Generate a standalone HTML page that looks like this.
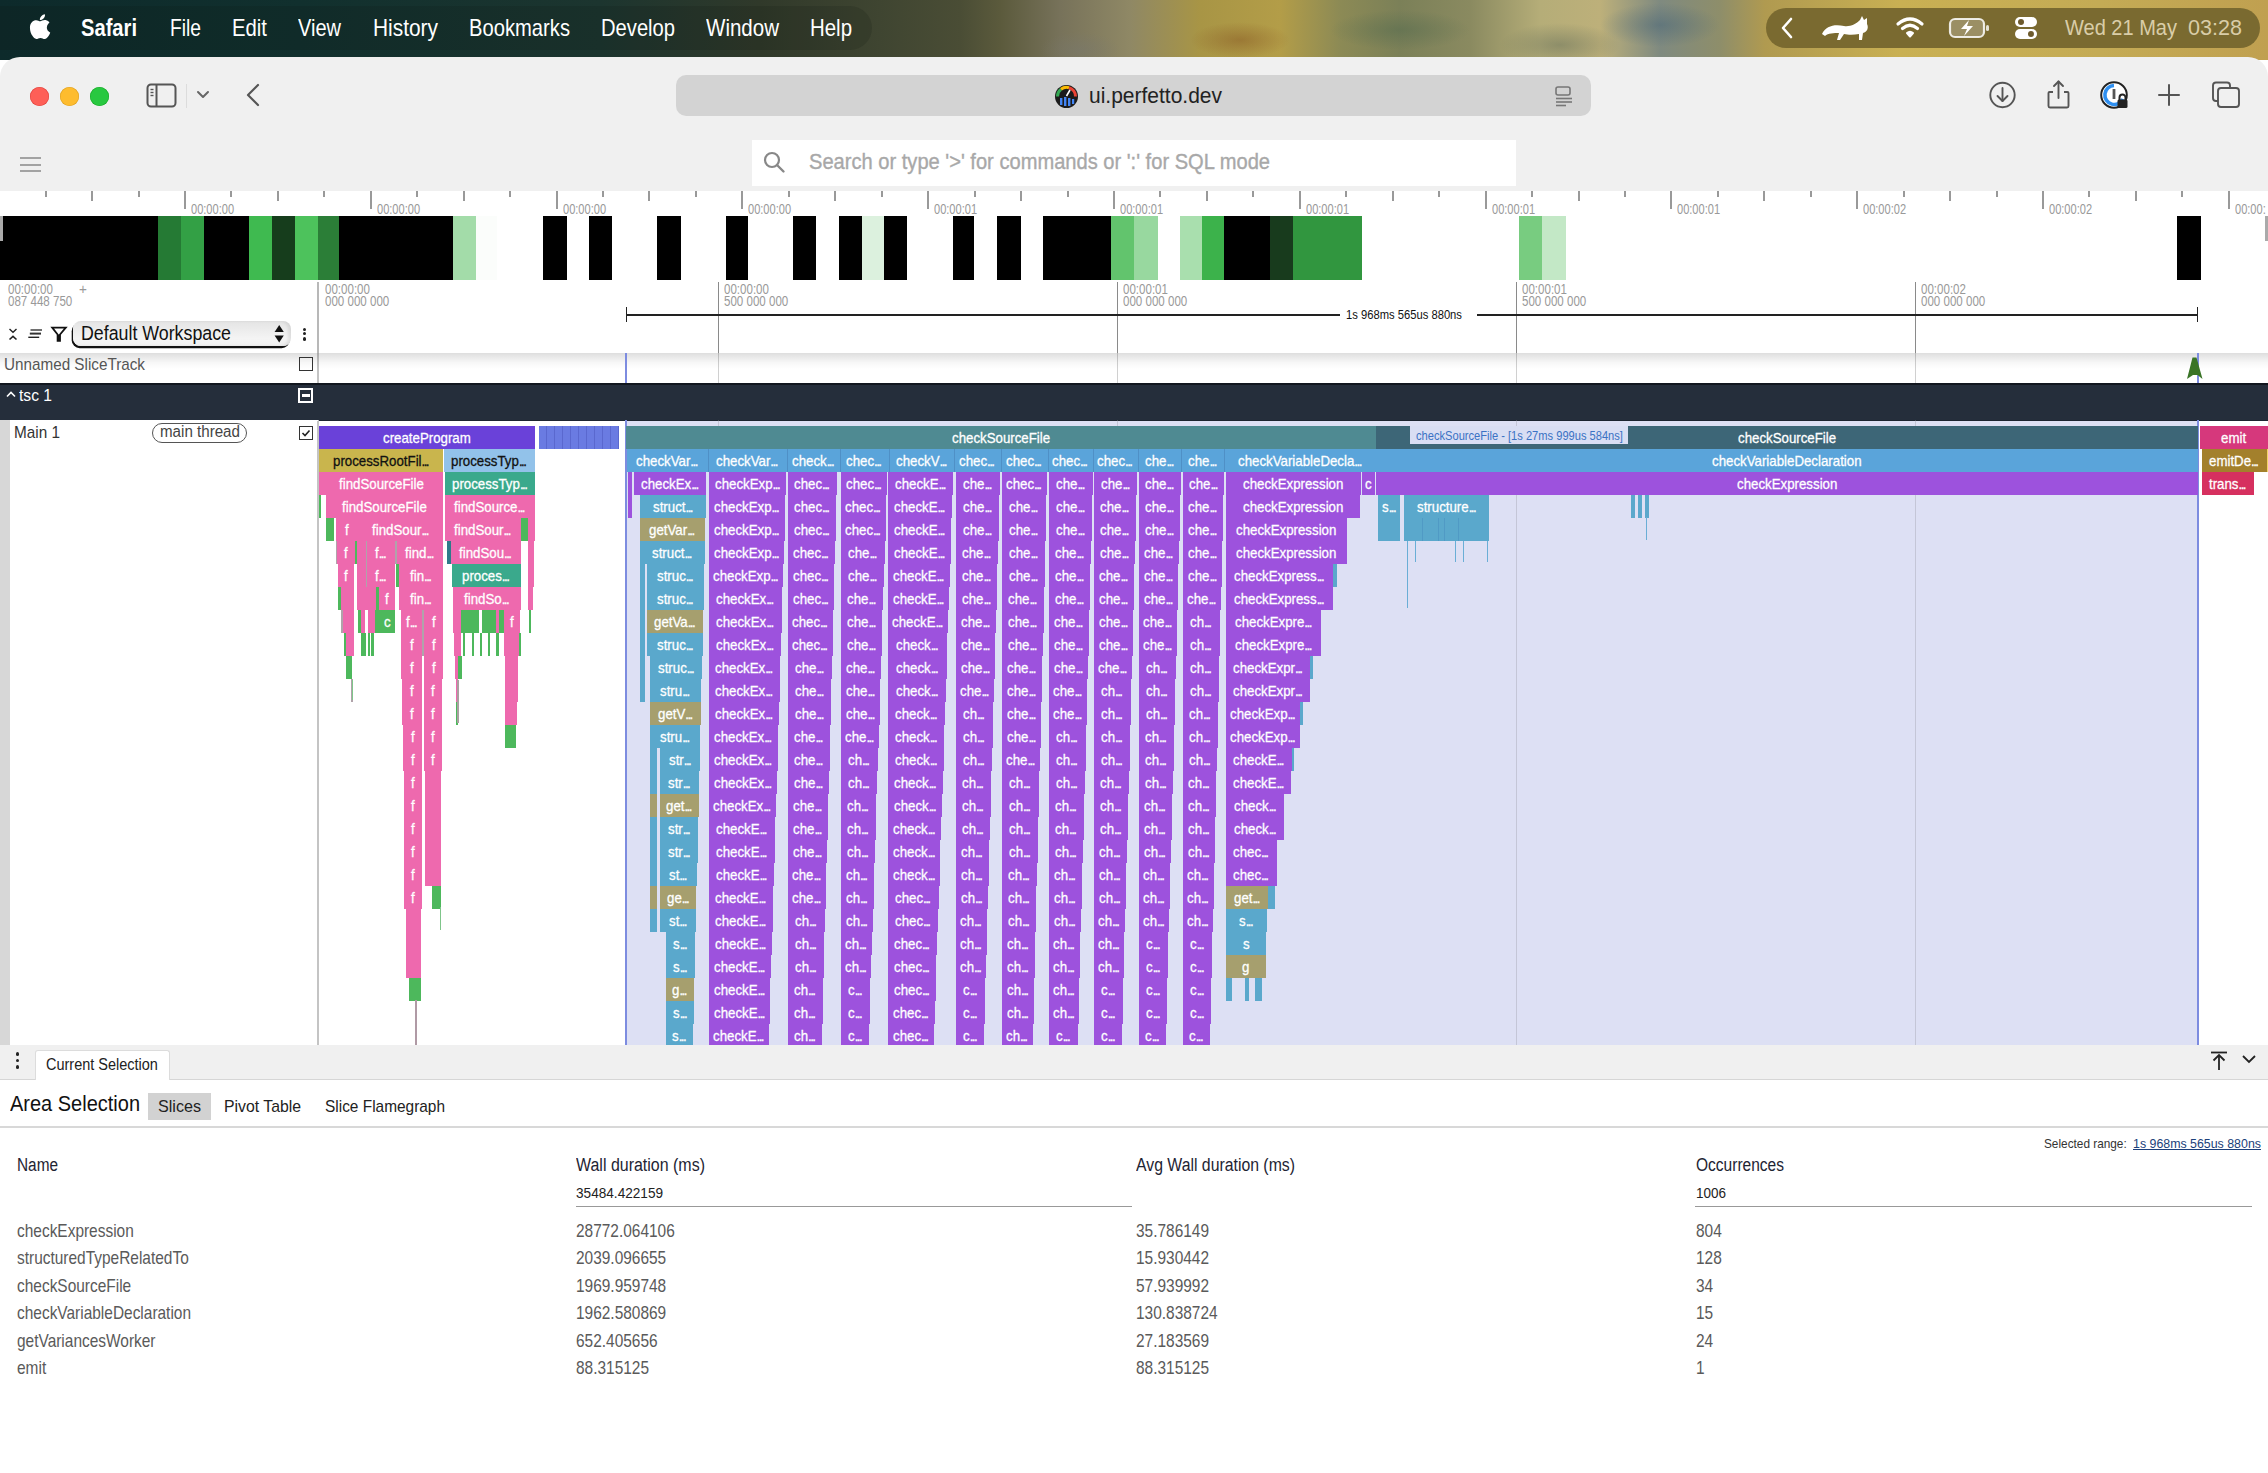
<!DOCTYPE html><html><head><meta charset="utf-8"><style>
*{margin:0;padding:0;box-sizing:border-box}
html,body{width:2268px;height:1473px;overflow:hidden;background:#fff;font-family:"Liberation Sans",sans-serif}
.a{position:absolute}
.t{position:absolute;white-space:nowrap;transform-origin:0 0}
.fl{-webkit-text-stroke:0.3px currentColor}
svg{position:absolute;overflow:visible}
</style></head><body><div class="a" style="left:0;top:0;width:2268px;height:60px;background:linear-gradient(90deg,#0d2a2b 0.00%,#11302e 13.23%,#1c352f 26.46%,#30392a 33.51%,#3f4531 38.80%,#4a4d35 42.33%,#5b5a3c 44.09%,#77725a 46.74%,#8f8865 49.82%,#a89545 52.91%,#b39d48 56.44%,#8c8a55 59.08%,#7b8058 61.73%,#8a8a60 64.81%,#b5ad78 67.90%,#bdb07a 70.55%,#7f8a80 73.19%,#8e8e6a 75.84%,#b09a50 77.82%,#c9b053 83.77%,#c4ab55 92.59%,#c0a050 100.00%)"></div>
<div class="a" style="left:0;top:0;width:2268px;height:60px;background:radial-gradient(ellipse 50px 18px at 1240px 40px,rgba(120,60,20,.35),transparent),radial-gradient(ellipse 70px 20px at 1400px 30px,rgba(90,110,80,.6),transparent),radial-gradient(ellipse 60px 22px at 1560px 45px,rgba(100,110,90,.5),transparent),radial-gradient(ellipse 60px 22px at 1660px 25px,rgba(70,100,120,.5),transparent),radial-gradient(ellipse 40px 18px at 1080px 50px,rgba(120,120,110,.5),transparent)"></div>
<div class="a" style="left:-40px;top:6px;width:912px;height:44px;border-radius:22px;background:rgba(15,20,12,.15)"></div>
<div class="a" style="left:1766px;top:8px;width:494px;height:40px;border-radius:20px;background:#7a6a30"></div>
<svg style="left:29px;top:14px" width="24" height="26" viewBox="0 0 170 200"><path fill="#fff" d="M150 68c-1 1-20 12-20 36 0 28 25 38 26 38 0 1-4 14-13 27-8 11-17 23-30 23s-17-8-32-8c-15 0-20 8-32 8s-21-11-30-24C8 152 0 128 0 105c0-37 24-57 48-57 13 0 23 8 31 8 8 0 20-9 35-9 6 0 26 1 36 21zM106 33c6-7 10-17 10-27 0-1 0-3 0-4-10 0-22 7-29 15-6 6-11 16-11 27 0 1 0 3 0 3 1 0 2 0 3 0 9 0 20-6 27-14z"/></svg>
<div class="t" style="left:81.00px;top:15.68px;font-size:24px;line-height:24px;color:#fff;transform:scaleX(0.8393);font-weight:bold;">Safari</div>
<div class="t" style="left:170.00px;top:15.68px;font-size:24px;line-height:24px;color:#fff;transform:scaleX(0.8019);">File</div>
<div class="t" style="left:232.00px;top:15.68px;font-size:24px;line-height:24px;color:#fff;transform:scaleX(0.8462);">Edit</div>
<div class="t" style="left:298.00px;top:15.68px;font-size:24px;line-height:24px;color:#fff;transform:scaleX(0.8337);">View</div>
<div class="t" style="left:373.00px;top:15.68px;font-size:24px;line-height:24px;color:#fff;transform:scaleX(0.8705);">History</div>
<div class="t" style="left:469.00px;top:15.68px;font-size:24px;line-height:24px;color:#fff;transform:scaleX(0.8413);">Bookmarks</div>
<div class="t" style="left:601.00px;top:15.68px;font-size:24px;line-height:24px;color:#fff;transform:scaleX(0.8406);">Develop</div>
<div class="t" style="left:706.00px;top:15.68px;font-size:24px;line-height:24px;color:#fff;transform:scaleX(0.8554);">Window</div>
<div class="t" style="left:810.00px;top:15.68px;font-size:24px;line-height:24px;color:#fff;transform:scaleX(0.8512);">Help</div>
<svg style="left:1780px;top:17px" width="14" height="22"><path d="M11 2 L3 11 L11 20" stroke="#fff" stroke-width="2.6" fill="none" stroke-linecap="round" stroke-linejoin="round"/></svg>
<svg style="left:1820px;top:14px" width="50" height="30" viewBox="0 0 50 30"><path fill="#fff" d="M2 20 C6 12 14 10 24 12 C30 13 36 10 40 6 L42 2 L44 6 L47 4 L47 10 C49 14 47 18 43 19 L42 26 L39 26 L39 20 C34 21 28 21 24 20 L20 26 L17 26 L19 19 C14 19 8 19 5 22 Z"/></svg>
<svg style="left:1895px;top:15px" width="30" height="24" viewBox="0 0 30 24"><path d="M3 9 Q15 -1 27 9" stroke="#fff" stroke-width="3.2" fill="none" stroke-linecap="round"/><path d="M7.5 13.5 Q15 7 22.5 13.5" stroke="#fff" stroke-width="3.2" fill="none" stroke-linecap="round"/><path d="M12 18 Q15 15.5 18 18 L15 21.5 Z" fill="#fff" stroke="#fff" stroke-width="2" stroke-linejoin="round"/></svg>
<svg style="left:1948px;top:16px" width="44" height="24" viewBox="0 0 44 24"><rect x="2" y="3" width="34" height="18" rx="5" stroke="#fff" stroke-opacity=".85" stroke-width="2.2" fill="rgba(255,255,255,.25)"/><rect x="38" y="9" width="3" height="6" rx="1.5" fill="#fff" fill-opacity=".8"/><path d="M21 4 L13 13 L19 13 L16 20 L25 10 L19 10 Z" fill="#fff"/></svg>
<svg style="left:2013px;top:15px" width="26" height="26" viewBox="0 0 26 26"><rect x="2" y="2" width="22" height="10" rx="5" fill="#fff"/><rect x="2" y="14" width="22" height="10" rx="5" fill="#fff"/><circle cx="8" cy="7" r="3" fill="#6d5a2c"/><circle cx="18" cy="19" r="3" fill="#6d5a2c"/></svg>
<div class="t" style="left:2065.00px;top:17.38px;font-size:22px;line-height:22px;color:#d9cda8;transform:scaleX(0.9099);">Wed 21 May</div>
<div class="t" style="left:2188.00px;top:17.38px;font-size:22px;line-height:22px;color:#d9cda8;transform:scaleX(0.9810);">03:28</div>
<div class="a" style="left:0;top:57px;width:2268px;height:1416px;background:#f0f0f0;border-radius:20px 20px 0 0"></div>
<div class="a" style="left:29.5px;top:86.5px;width:19px;height:19px;border-radius:50%;background:#fe5f57;box-shadow:inset 0 0 0 .6px #e0443e"></div>
<div class="a" style="left:59.5px;top:86.5px;width:19px;height:19px;border-radius:50%;background:#febc2e;box-shadow:inset 0 0 0 .6px #dea123"></div>
<div class="a" style="left:89.5px;top:86.5px;width:19px;height:19px;border-radius:50%;background:#28c840;box-shadow:inset 0 0 0 .6px #1aab29"></div>
<svg style="left:146px;top:83px" width="32" height="26" viewBox="0 0 32 26"><rect x="1.5" y="1.5" width="28" height="22" rx="3.5" stroke="#555" stroke-width="2" fill="none"/><line x1="10.5" y1="2" x2="10.5" y2="23" stroke="#555" stroke-width="2"/><line x1="4.5" y1="6.5" x2="7.5" y2="6.5" stroke="#555" stroke-width="1.4"/><line x1="4.5" y1="9.5" x2="7.5" y2="9.5" stroke="#555" stroke-width="1.4"/><line x1="4.5" y1="12.5" x2="7.5" y2="12.5" stroke="#555" stroke-width="1.4"/></svg>
<div class="a" style="left:186px;top:84px;width:1px;height:24px;background:#dcdcdc"></div>
<svg style="left:196px;top:90px" width="14" height="10"><path d="M2 2 L7 7 L12 2" stroke="#666" stroke-width="2" fill="none" stroke-linecap="round" stroke-linejoin="round"/></svg>
<svg style="left:244px;top:82px" width="18" height="26"><path d="M14 3 L4 13 L14 23" stroke="#555" stroke-width="2.2" fill="none" stroke-linecap="round" stroke-linejoin="round"/></svg>
<div class="a" style="left:676px;top:75px;width:915px;height:41px;border-radius:10px;background:#d3d3d3"></div>
<svg style="left:1054px;top:84px" width="25" height="25" viewBox="0 0 25 25"><circle cx="12.5" cy="12.5" r="11.5" fill="#1b1b1b"/><path d="M3.5 12.5 A9 9 0 0 1 7 5.3" stroke="#34a853" stroke-width="3" fill="none"/><path d="M7 5.3 A9 9 0 0 1 15 3.7" stroke="#fbbc05" stroke-width="3" fill="none"/><path d="M15 3.7 A9 9 0 0 1 21.5 12.5" stroke="#ea4335" stroke-width="3" fill="none"/><rect x="6" y="14" width="2.4" height="7" fill="#4285f4"/><rect x="10" y="13" width="2.4" height="9" fill="#4285f4"/><rect x="14" y="14" width="2.4" height="8" fill="#4285f4"/><rect x="18" y="15" width="2.2" height="5" fill="#4285f4"/><line x1="12.5" y1="12" x2="16" y2="6" stroke="#fff" stroke-width="1.6"/></svg>
<div class="t" style="left:1089.00px;top:85.38px;font-size:22px;line-height:22px;color:#222;transform:scaleX(0.9540);">ui.perfetto.dev</div>
<svg style="left:1553px;top:85px" width="22" height="22" viewBox="0 0 22 22"><rect x="3" y="2" width="14" height="8" rx="2" stroke="#777" stroke-width="1.6" fill="none"/><line x1="3" y1="13.5" x2="19" y2="13.5" stroke="#777" stroke-width="1.6"/><line x1="3" y1="17" x2="19" y2="17" stroke="#777" stroke-width="1.6"/><line x1="3" y1="20.5" x2="13" y2="20.5" stroke="#777" stroke-width="1.6"/></svg>
<svg style="left:1988px;top:81px" width="30" height="30" viewBox="0 0 30 30"><circle cx="14.5" cy="14" r="12.2" stroke="#555" stroke-width="1.9" fill="none"/><line x1="14.5" y1="7" x2="14.5" y2="20" stroke="#555" stroke-width="1.9" stroke-linecap="round"/><path d="M9.5 15 L14.5 20 L19.5 15" stroke="#555" stroke-width="1.9" fill="none" stroke-linecap="round" stroke-linejoin="round"/></svg>
<svg style="left:2044px;top:78px" width="30" height="34" viewBox="0 0 30 34"><path d="M9 14 L5.5 14 Q4.5 14 4.5 15 L4.5 28 Q4.5 29.5 6 29.5 L23 29.5 Q24.5 29.5 24.5 28 L24.5 15 Q24.5 14 23.5 14 L20 14" stroke="#555" stroke-width="1.9" fill="none" stroke-linejoin="round"/><line x1="14.5" y1="3.5" x2="14.5" y2="20" stroke="#555" stroke-width="1.9" stroke-linecap="round"/><path d="M10 8 L14.5 3.5 L19 8" stroke="#555" stroke-width="1.9" fill="none" stroke-linecap="round" stroke-linejoin="round"/></svg>
<svg style="left:2099px;top:80px" width="34" height="32" viewBox="0 0 34 32"><circle cx="15" cy="15" r="12.8" stroke="#222" stroke-width="2" fill="#fff"/><path d="M15 5.5 A9.5 9.5 0 1 0 24 19" stroke="#2e8ff0" stroke-width="3.6" fill="none"/><rect x="13.6" y="9" width="2.8" height="10" fill="#555"/><rect x="18.5" y="19.5" width="10" height="8.5" rx="1.5" fill="#222"/><path d="M20.5 20 L20.5 17.5 A3 3 0 0 1 26.5 17.5 L26.5 20" stroke="#222" stroke-width="2" fill="none"/></svg>
<svg style="left:2156px;top:82px" width="26" height="26"><line x1="13" y1="3" x2="13" y2="23" stroke="#555" stroke-width="2" stroke-linecap="round"/><line x1="3" y1="13" x2="23" y2="13" stroke="#555" stroke-width="2" stroke-linecap="round"/></svg>
<svg style="left:2210px;top:80px" width="32" height="30" viewBox="0 0 32 30"><path d="M8 21 L6 21 Q3 21 3 18 L3 5.5 Q3 2.5 6 2.5 L17 2.5 Q20 2.5 20 5.5 L20 7.5" stroke="#555" stroke-width="1.9" fill="none"/><rect x="8" y="8" width="21" height="19" rx="3" stroke="#555" stroke-width="1.9" fill="none"/></svg>
<div class="a" style="left:20px;top:157px;width:21px;height:2px;background:#a3a3a3;"></div>
<div class="a" style="left:20px;top:163.5px;width:21px;height:2px;background:#a3a3a3;"></div>
<div class="a" style="left:20px;top:170px;width:21px;height:2px;background:#a3a3a3;"></div>
<div class="a" style="left:752px;top:140px;width:764px;height:46px;background:#fff"></div>
<svg style="left:762px;top:150px" width="26" height="26" viewBox="0 0 26 26"><circle cx="10" cy="10" r="7" stroke="#888" stroke-width="2.2" fill="none"/><line x1="15" y1="15" x2="21.5" y2="21.5" stroke="#888" stroke-width="2.4" stroke-linecap="round"/></svg>
<div class="t" style="left:809.00px;top:151.38px;font-size:22px;line-height:22px;color:#a8a8a8;transform:scaleX(0.9139);-webkit-text-stroke:0.35px #a8a8a8;">Search or type '&gt;' for commands or ':' for SQL mode</div>
<div class="a" style="left:0px;top:191px;width:2268px;height:162px;background:#fff;"></div>
<div class="a" style="left:45px;top:191px;width:1.5px;height:6px;background:#999;"></div>
<div class="a" style="left:91px;top:191px;width:1.5px;height:10px;background:#999;"></div>
<div class="a" style="left:138px;top:191px;width:1.5px;height:6px;background:#999;"></div>
<div class="a" style="left:184px;top:191px;width:1.5px;height:18px;background:#999;"></div>
<div class="a" style="left:230px;top:191px;width:1.5px;height:6px;background:#999;"></div>
<div class="a" style="left:277px;top:191px;width:1.5px;height:10px;background:#999;"></div>
<div class="a" style="left:323px;top:191px;width:1.5px;height:6px;background:#999;"></div>
<div class="a" style="left:370px;top:191px;width:1.5px;height:18px;background:#999;"></div>
<div class="a" style="left:416px;top:191px;width:1.5px;height:6px;background:#999;"></div>
<div class="a" style="left:463px;top:191px;width:1.5px;height:10px;background:#999;"></div>
<div class="a" style="left:509px;top:191px;width:1.5px;height:6px;background:#999;"></div>
<div class="a" style="left:556px;top:191px;width:1.5px;height:18px;background:#999;"></div>
<div class="a" style="left:602px;top:191px;width:1.5px;height:6px;background:#999;"></div>
<div class="a" style="left:648px;top:191px;width:1.5px;height:10px;background:#999;"></div>
<div class="a" style="left:695px;top:191px;width:1.5px;height:6px;background:#999;"></div>
<div class="a" style="left:741px;top:191px;width:1.5px;height:18px;background:#999;"></div>
<div class="a" style="left:788px;top:191px;width:1.5px;height:6px;background:#999;"></div>
<div class="a" style="left:834px;top:191px;width:1.5px;height:10px;background:#999;"></div>
<div class="a" style="left:881px;top:191px;width:1.5px;height:6px;background:#999;"></div>
<div class="a" style="left:927px;top:191px;width:1.5px;height:18px;background:#999;"></div>
<div class="a" style="left:974px;top:191px;width:1.5px;height:6px;background:#999;"></div>
<div class="a" style="left:1020px;top:191px;width:1.5px;height:10px;background:#999;"></div>
<div class="a" style="left:1067px;top:191px;width:1.5px;height:6px;background:#999;"></div>
<div class="a" style="left:1113px;top:191px;width:1.5px;height:18px;background:#999;"></div>
<div class="a" style="left:1159px;top:191px;width:1.5px;height:6px;background:#999;"></div>
<div class="a" style="left:1206px;top:191px;width:1.5px;height:10px;background:#999;"></div>
<div class="a" style="left:1252px;top:191px;width:1.5px;height:6px;background:#999;"></div>
<div class="a" style="left:1299px;top:191px;width:1.5px;height:18px;background:#999;"></div>
<div class="a" style="left:1345px;top:191px;width:1.5px;height:6px;background:#999;"></div>
<div class="a" style="left:1392px;top:191px;width:1.5px;height:10px;background:#999;"></div>
<div class="a" style="left:1438px;top:191px;width:1.5px;height:6px;background:#999;"></div>
<div class="a" style="left:1485px;top:191px;width:1.5px;height:18px;background:#999;"></div>
<div class="a" style="left:1531px;top:191px;width:1.5px;height:6px;background:#999;"></div>
<div class="a" style="left:1578px;top:191px;width:1.5px;height:10px;background:#999;"></div>
<div class="a" style="left:1624px;top:191px;width:1.5px;height:6px;background:#999;"></div>
<div class="a" style="left:1670px;top:191px;width:1.5px;height:18px;background:#999;"></div>
<div class="a" style="left:1717px;top:191px;width:1.5px;height:6px;background:#999;"></div>
<div class="a" style="left:1763px;top:191px;width:1.5px;height:10px;background:#999;"></div>
<div class="a" style="left:1810px;top:191px;width:1.5px;height:6px;background:#999;"></div>
<div class="a" style="left:1856px;top:191px;width:1.5px;height:18px;background:#999;"></div>
<div class="a" style="left:1903px;top:191px;width:1.5px;height:6px;background:#999;"></div>
<div class="a" style="left:1949px;top:191px;width:1.5px;height:10px;background:#999;"></div>
<div class="a" style="left:1996px;top:191px;width:1.5px;height:6px;background:#999;"></div>
<div class="a" style="left:2042px;top:191px;width:1.5px;height:18px;background:#999;"></div>
<div class="a" style="left:2088px;top:191px;width:1.5px;height:6px;background:#999;"></div>
<div class="a" style="left:2135px;top:191px;width:1.5px;height:10px;background:#999;"></div>
<div class="a" style="left:2181px;top:191px;width:1.5px;height:6px;background:#999;"></div>
<div class="a" style="left:2228px;top:191px;width:1.5px;height:18px;background:#999;"></div>
<div class="t" style="left:191.00px;top:202.15px;font-size:14px;line-height:14px;color:#999;transform:scaleX(0.7900);">00:00:00</div>
<div class="t" style="left:376.80px;top:202.15px;font-size:14px;line-height:14px;color:#999;transform:scaleX(0.7900);">00:00:00</div>
<div class="t" style="left:562.60px;top:202.15px;font-size:14px;line-height:14px;color:#999;transform:scaleX(0.7900);">00:00:00</div>
<div class="t" style="left:748.40px;top:202.15px;font-size:14px;line-height:14px;color:#999;transform:scaleX(0.7900);">00:00:00</div>
<div class="t" style="left:934.20px;top:202.15px;font-size:14px;line-height:14px;color:#999;transform:scaleX(0.7900);">00:00:01</div>
<div class="t" style="left:1120.00px;top:202.15px;font-size:14px;line-height:14px;color:#999;transform:scaleX(0.7900);">00:00:01</div>
<div class="t" style="left:1305.80px;top:202.15px;font-size:14px;line-height:14px;color:#999;transform:scaleX(0.7900);">00:00:01</div>
<div class="t" style="left:1491.60px;top:202.15px;font-size:14px;line-height:14px;color:#999;transform:scaleX(0.7900);">00:00:01</div>
<div class="t" style="left:1677.40px;top:202.15px;font-size:14px;line-height:14px;color:#999;transform:scaleX(0.7900);">00:00:01</div>
<div class="t" style="left:1863.20px;top:202.15px;font-size:14px;line-height:14px;color:#999;transform:scaleX(0.7900);">00:00:02</div>
<div class="t" style="left:2049.00px;top:202.15px;font-size:14px;line-height:14px;color:#999;transform:scaleX(0.7900);">00:00:02</div>
<div class="t" style="left:2234.80px;top:202.15px;font-size:14px;line-height:14px;color:#999;transform:scaleX(0.7900);">00:00:</div>
<div class="a" style="left:0px;top:216px;width:158px;height:64px;background:#000;"></div>
<div class="a" style="left:158px;top:216px;width:23px;height:64px;background:#257a34;"></div>
<div class="a" style="left:181px;top:216px;width:23px;height:64px;background:#33a045;"></div>
<div class="a" style="left:204px;top:216px;width:45px;height:64px;background:#000;"></div>
<div class="a" style="left:249px;top:216px;width:23px;height:64px;background:#3fba50;"></div>
<div class="a" style="left:272px;top:216px;width:23px;height:64px;background:#163d1c;"></div>
<div class="a" style="left:295px;top:216px;width:23px;height:64px;background:#4dc25c;"></div>
<div class="a" style="left:318px;top:216px;width:21px;height:64px;background:#2b7e37;"></div>
<div class="a" style="left:339px;top:216px;width:114px;height:64px;background:#000;"></div>
<div class="a" style="left:453px;top:216px;width:23px;height:64px;background:#a3dca9;"></div>
<div class="a" style="left:476px;top:216px;width:21px;height:64px;background:#fbfdfb;"></div>
<div class="a" style="left:543px;top:216px;width:24px;height:64px;background:#000;"></div>
<div class="a" style="left:589px;top:216px;width:23px;height:64px;background:#000;"></div>
<div class="a" style="left:657px;top:216px;width:24px;height:64px;background:#000;"></div>
<div class="a" style="left:726px;top:216px;width:22px;height:64px;background:#000;"></div>
<div class="a" style="left:793px;top:216px;width:23px;height:64px;background:#000;"></div>
<div class="a" style="left:839px;top:216px;width:23px;height:64px;background:#000;"></div>
<div class="a" style="left:862px;top:216px;width:22px;height:64px;background:#dcf1de;"></div>
<div class="a" style="left:884px;top:216px;width:23px;height:64px;background:#000;"></div>
<div class="a" style="left:953px;top:216px;width:21px;height:64px;background:#000;"></div>
<div class="a" style="left:997px;top:216px;width:24px;height:64px;background:#000;"></div>
<div class="a" style="left:1043px;top:216px;width:68px;height:64px;background:#000;"></div>
<div class="a" style="left:1111px;top:216px;width:23px;height:64px;background:#62c46d;"></div>
<div class="a" style="left:1134px;top:216px;width:24px;height:64px;background:#98d89f;"></div>
<div class="a" style="left:1180px;top:216px;width:22px;height:64px;background:#a9dfae;"></div>
<div class="a" style="left:1202px;top:216px;width:22px;height:64px;background:#3cb24b;"></div>
<div class="a" style="left:1224px;top:216px;width:46px;height:64px;background:#000;"></div>
<div class="a" style="left:1270px;top:216px;width:23px;height:64px;background:#183b1d;"></div>
<div class="a" style="left:1293px;top:216px;width:69px;height:64px;background:#31963f;"></div>
<div class="a" style="left:1519px;top:216px;width:23px;height:64px;background:#78cc80;"></div>
<div class="a" style="left:1542px;top:216px;width:24px;height:64px;background:#c3e8c6;"></div>
<div class="a" style="left:2177px;top:216px;width:24px;height:64px;background:#000;"></div>
<div class="a" style="left:0px;top:216px;width:3px;height:25px;background:#aaa;"></div>
<div class="a" style="left:2265px;top:216px;width:3px;height:25px;background:#aaa;"></div>
<div class="t" style="left:8.00px;top:280.80px;font-size:15px;line-height:15px;color:#999;transform:scaleX(0.7700);">00:00:00</div>
<div class="t" style="left:79.00px;top:280.80px;font-size:15px;line-height:15px;color:#999;transform:scaleX(0.9000);">+</div>
<div class="t" style="left:8.00px;top:293.30px;font-size:15px;line-height:15px;color:#999;transform:scaleX(0.7700);">087 448 750</div>
<div class="t" style="left:325.00px;top:280.80px;font-size:15px;line-height:15px;color:#999;transform:scaleX(0.7700);">00:00:00</div>
<div class="t" style="left:325.00px;top:293.30px;font-size:15px;line-height:15px;color:#999;transform:scaleX(0.7700);">000 000 000</div>
<div class="a" style="left:718px;top:282px;width:1.2px;height:71px;background:#8a8a8a;"></div>
<div class="t" style="left:724.00px;top:280.80px;font-size:15px;line-height:15px;color:#999;transform:scaleX(0.7700);">00:00:00</div>
<div class="t" style="left:724.00px;top:293.30px;font-size:15px;line-height:15px;color:#999;transform:scaleX(0.7700);">500 000 000</div>
<div class="a" style="left:1117px;top:282px;width:1.2px;height:71px;background:#8a8a8a;"></div>
<div class="t" style="left:1123.00px;top:280.80px;font-size:15px;line-height:15px;color:#999;transform:scaleX(0.7700);">00:00:01</div>
<div class="t" style="left:1123.00px;top:293.30px;font-size:15px;line-height:15px;color:#999;transform:scaleX(0.7700);">000 000 000</div>
<div class="a" style="left:1516px;top:282px;width:1.2px;height:71px;background:#8a8a8a;"></div>
<div class="t" style="left:1522.00px;top:280.80px;font-size:15px;line-height:15px;color:#999;transform:scaleX(0.7700);">00:00:01</div>
<div class="t" style="left:1522.00px;top:293.30px;font-size:15px;line-height:15px;color:#999;transform:scaleX(0.7700);">500 000 000</div>
<div class="a" style="left:1915px;top:282px;width:1.2px;height:71px;background:#8a8a8a;"></div>
<div class="t" style="left:1921.00px;top:280.80px;font-size:15px;line-height:15px;color:#999;transform:scaleX(0.7700);">00:00:02</div>
<div class="t" style="left:1921.00px;top:293.30px;font-size:15px;line-height:15px;color:#999;transform:scaleX(0.7700);">000 000 000</div>
<div class="a" style="left:317px;top:282px;width:2px;height:763px;background:#b8b8b8;"></div>
<div class="a" style="left:626px;top:314.3px;width:714px;height:1.6px;background:#222;"></div>
<div class="a" style="left:1477px;top:314.3px;width:721px;height:1.6px;background:#222;"></div>
<div class="a" style="left:626px;top:307px;width:1.3px;height:15px;background:#222;"></div>
<div class="a" style="left:2197px;top:307px;width:1.3px;height:15px;background:#222;"></div>
<div class="t" style="left:1346.00px;top:308.00px;font-size:13px;line-height:13px;color:#111;transform:scaleX(0.8627);">1s 968ms 565us 880ns</div>
<svg style="left:6px;top:325px" width="14" height="18" viewBox="0 0 14 18"><path d="M3.5 4 L7 7.2 L10.5 4" stroke="#222" stroke-width="1.4" fill="none"/><path d="M3.5 14.5 L7 11.3 L10.5 14.5" stroke="#222" stroke-width="1.6" fill="none"/></svg>
<svg style="left:26px;top:326px" width="18" height="16" viewBox="0 0 18 16"><line x1="4.5" y1="4" x2="16" y2="4" stroke="#222" stroke-width="1.3"/><line x1="3.8" y1="7.6" x2="15" y2="7.6" stroke="#333" stroke-width="2"/><line x1="2.3" y1="11.3" x2="13.2" y2="11.3" stroke="#222" stroke-width="1.4"/></svg>
<svg style="left:50px;top:325px" width="18" height="18" viewBox="0 0 18 18"><path d="M2.2 2.6 L15.8 2.6 L10 9.5 L10 15.8 L7.6 15.8 L7.6 9.5 Z" stroke="#111" stroke-width="1.8" fill="none" stroke-linejoin="miter"/><rect x="7.6" y="9.5" width="2.4" height="6.3" fill="#111"/></svg>
<div class="a" style="left:72.5px;top:321.3px;width:218.7px;height:24.5px;border-radius:8px;background:linear-gradient(#e4e4e4,#f4f4f4 70%,#f0f0f0);box-shadow:-1.3px 2.2px 0 #111, inset -3px 0 3px rgba(0,0,0,.08)"></div>
<div class="t" style="left:81.00px;top:323.15px;font-size:20.5px;line-height:20.5px;color:#111;transform:scaleX(0.8678);">Default Workspace</div>
<svg style="left:272px;top:323px" width="14" height="22" viewBox="0 0 14 22"><path d="M7.2 2 L11.8 9 L2.6 9 Z" fill="#111"/><path d="M7.2 19.5 L11.8 12.5 L2.6 12.5 Z" fill="#111"/></svg>
<div class="a" style="left:302.7px;top:327.5px;width:3.3px;height:3.3px;border-radius:50%;background:#222"></div>
<div class="a" style="left:302.7px;top:332.2px;width:3.3px;height:3.3px;border-radius:50%;background:#222"></div>
<div class="a" style="left:302.7px;top:337.3px;width:3.3px;height:3.3px;border-radius:50%;background:#222"></div>
<div class="a" style="left:0px;top:353px;width:2268px;height:30px;background:#fff;"></div>
<div class="a" style="left:718px;top:353px;width:1px;height:30px;background:rgba(150,150,150,.45);"></div>
<div class="a" style="left:1117px;top:353px;width:1px;height:30px;background:rgba(150,150,150,.45);"></div>
<div class="a" style="left:1516px;top:353px;width:1px;height:30px;background:rgba(150,150,150,.45);"></div>
<div class="a" style="left:1915px;top:353px;width:1px;height:30px;background:rgba(150,150,150,.45);"></div>
<div class="a" style="left:317px;top:353px;width:2px;height:30px;background:#c4c4c4;"></div>
<div class="a" style="left:0;top:353px;width:2268px;height:16px;background:linear-gradient(rgba(0,0,0,.13),rgba(0,0,0,.03) 60%,rgba(0,0,0,0))"></div>
<div class="t" style="left:4.00px;top:356.11px;font-size:17px;line-height:17px;color:#555;transform:scaleX(0.8972);">Unnamed SliceTrack</div>
<div class="a" style="left:299px;top:357px;width:14px;height:14px;border:1.5px solid #333"></div>
<div class="a" style="left:0px;top:383px;width:2268px;height:37px;background:#252e3b;"></div>
<div class="a" style="left:0px;top:383px;width:2268px;height:1.5px;background:#12171f;"></div>
<svg style="left:5px;top:389px" width="12" height="10"><path d="M2 7.5 L6 3.5 L10 7.5" stroke="#fff" stroke-width="1.6" fill="none"/></svg>
<div class="t" style="left:19.00px;top:386.61px;font-size:17px;line-height:17px;color:#fff;transform:scaleX(0.9195);">tsc 1</div>
<div class="a" style="left:298px;top:388px;width:15px;height:15px;border:2px solid #fff"></div>
<div class="a" style="left:301.5px;top:394px;width:8px;height:2.6px;background:#fff;"></div>
<div class="a" style="left:0px;top:420px;width:318px;height:625px;background:#fff;"></div>
<div class="a" style="left:0px;top:420px;width:10px;height:625px;background:#d7d7d7;"></div>
<div class="t" style="left:14.00px;top:424.11px;font-size:17px;line-height:17px;color:#333;transform:scaleX(0.9017);">Main 1</div>
<div class="a" style="left:152px;top:423px;width:95px;height:20px;border-radius:10px;border:1.2px solid #555"></div>
<div class="t" style="left:160.00px;top:424.46px;font-size:16px;line-height:16px;color:#444;transform:scaleX(0.9460);">main thread</div>
<div class="a" style="left:299px;top:426px;width:14px;height:14px;border:1.5px solid #333"></div>
<svg style="left:300px;top:427px" width="12" height="12"><path d="M2.5 6 L5 8.5 L9.5 3.5" stroke="#222" stroke-width="1.6" fill="none"/></svg>
<div class="a" style="left:319px;top:420px;width:1949px;height:625px;background:#fff;"></div>
<div class="a" style="left:317px;top:421px;width:2px;height:624px;background:#c4c4c4;"></div>
<div class="a" style="left:626px;top:420px;width:1572px;height:625px;background:#dde0f4;"></div>
<div class="a" style="left:319px;top:420px;width:1949px;height:1px;background:#1c2430;"></div>
<div class="a" style="left:718px;top:420px;width:1px;height:625px;background:rgba(150,150,160,.35);"></div>
<div class="a" style="left:1117px;top:420px;width:1px;height:625px;background:rgba(150,150,160,.35);"></div>
<div class="a" style="left:1516px;top:420px;width:1px;height:625px;background:rgba(150,150,160,.35);"></div>
<div class="a" style="left:1915px;top:420px;width:1px;height:625px;background:rgba(150,150,160,.35);"></div>
<div class="a" style="left:625px;top:353px;width:1.8px;height:30px;background:#7d8ce0;"></div>
<div class="a" style="left:625px;top:420px;width:1.8px;height:625px;background:#7d8ce0;"></div>
<div class="a" style="left:2197px;top:353px;width:1.8px;height:30px;background:#7d8ce0;"></div>
<div class="a" style="left:2197px;top:420px;width:1.8px;height:625px;background:#7d8ce0;"></div>
<svg style="left:2186px;top:356px" width="18" height="26"><path d="M1 23 L6.5 1.5 L10.5 1.5 L16.5 23 L11.5 19 L7 19 Z" fill="#3a7427"/></svg>
<div class="a" style="left:319px;top:426px;width:216px;height:23px;background:#6a41d9"></div>
<div class="t fl" style="left:383.09px;top:429.90px;font-size:15px;line-height:15px;color:#fff;transform:scaleX(0.8850)">createProgram</div>
<div class="a" style="left:539px;top:426px;width:80px;height:23px;background:repeating-linear-gradient(90deg,#6a7be2 0px,#6a7be2 7px,#5a68cf 7px,#5a68cf 8px)"></div>
<div class="a" style="left:319px;top:449px;width:124px;height:23px;background:#c9b54d"></div>
<div class="t fl" style="left:332.62px;top:452.90px;font-size:15px;line-height:15px;color:#111;transform:scaleX(0.8850)">processRootFil<span style="letter-spacing:-1.73px">...</span></div>
<div class="a" style="left:444px;top:449px;width:91px;height:23px;background:#92c2ea"></div>
<div class="t fl" style="left:451.44px;top:452.90px;font-size:15px;line-height:15px;color:#111;transform:scaleX(0.8850)">processTyp<span style="letter-spacing:-1.73px">...</span></div>
<div class="a" style="left:319px;top:472px;width:124px;height:23px;background:#ee69ae"></div>
<div class="t fl" style="left:338.58px;top:475.90px;font-size:15px;line-height:15px;color:#fff;transform:scaleX(0.8850)">findSourceFile</div>
<div class="a" style="left:445px;top:472px;width:90px;height:23px;background:#3aa98c"></div>
<div class="t fl" style="left:451.94px;top:475.90px;font-size:15px;line-height:15px;color:#fff;transform:scaleX(0.8850)">processTyp<span style="letter-spacing:-1.73px">...</span></div>
<div class="a" style="left:319px;top:495px;width:2px;height:23px;background:#4db85c"></div>
<div class="a" style="left:326px;top:495px;width:117px;height:23px;background:#ee69ae"></div>
<div class="t fl" style="left:342.08px;top:498.90px;font-size:15px;line-height:15px;color:#fff;transform:scaleX(0.8850)">findSourceFile</div>
<div class="a" style="left:445px;top:495px;width:90px;height:23px;background:#ee69ae"></div>
<div class="t fl" style="left:454.15px;top:498.90px;font-size:15px;line-height:15px;color:#fff;transform:scaleX(0.8850)">findSource<span style="letter-spacing:-1.73px">...</span></div>
<div class="a" style="left:326px;top:518px;width:8px;height:23px;background:#4db85c"></div>
<div class="a" style="left:336px;top:518px;width:22px;height:23px;background:#ee69ae"></div>
<div class="t fl" style="left:345.15px;top:521.90px;font-size:15px;line-height:15px;color:#fff;transform:scaleX(0.8850)">f</div>
<div class="a" style="left:358px;top:518px;width:85px;height:23px;background:#ee69ae"></div>
<div class="t fl" style="left:371.66px;top:521.90px;font-size:15px;line-height:15px;color:#fff;transform:scaleX(0.8850)">findSour<span style="letter-spacing:-1.73px">...</span></div>
<div class="a" style="left:445px;top:518px;width:76px;height:23px;background:#ee69ae"></div>
<div class="t fl" style="left:454.16px;top:521.90px;font-size:15px;line-height:15px;color:#fff;transform:scaleX(0.8850)">findSour<span style="letter-spacing:-1.73px">...</span></div>
<div class="a" style="left:521px;top:518px;width:7px;height:23px;background:#4db85c"></div>
<div class="a" style="left:528px;top:518px;width:7px;height:23px;background:#ee69ae"></div>
<div class="a" style="left:336px;top:541px;width:1px;height:23px;background:#b0a3aa"></div>
<div class="a" style="left:337px;top:541px;width:18px;height:23px;background:#ee69ae"></div>
<div class="t fl" style="left:344.15px;top:544.90px;font-size:15px;line-height:15px;color:#fff;transform:scaleX(0.8850)">f</div>
<div class="a" style="left:355px;top:541px;width:2px;height:23px;background:#4db85c"></div>
<div class="a" style="left:357px;top:541px;width:9px;height:23px;background:#ee69ae"></div>
<div class="a" style="left:366px;top:541px;width:1px;height:23px;background:#b0a3aa"></div>
<div class="a" style="left:367px;top:541px;width:28px;height:23px;background:#ee69ae"></div>
<div class="t fl" style="left:375.04px;top:544.90px;font-size:15px;line-height:15px;color:#fff;transform:scaleX(0.8850)">f<span style="letter-spacing:-1.73px">...</span></div>
<div class="a" style="left:395px;top:541px;width:2px;height:23px;background:#b0a3aa"></div>
<div class="a" style="left:397px;top:541px;width:46px;height:23px;background:#ee69ae"></div>
<div class="t fl" style="left:405.18px;top:544.90px;font-size:15px;line-height:15px;color:#fff;transform:scaleX(0.8850)">find<span style="letter-spacing:-1.73px">...</span></div>
<div class="a" style="left:447px;top:541px;width:4px;height:23px;background:#2f7a8a"></div>
<div class="a" style="left:451px;top:541px;width:70px;height:23px;background:#ee69ae"></div>
<div class="t fl" style="left:459.37px;top:544.90px;font-size:15px;line-height:15px;color:#fff;transform:scaleX(0.8850)">findSou<span style="letter-spacing:-1.73px">...</span></div>
<div class="a" style="left:528px;top:541px;width:6px;height:23px;background:#ee69ae"></div>
<div class="a" style="left:338px;top:564px;width:16px;height:23px;background:#ee69ae"></div>
<div class="t fl" style="left:344.15px;top:567.90px;font-size:15px;line-height:15px;color:#fff;transform:scaleX(0.8850)">f</div>
<div class="a" style="left:357px;top:564px;width:9px;height:23px;background:#ee69ae"></div>
<div class="a" style="left:366px;top:564px;width:1px;height:23px;background:#b0a3aa"></div>
<div class="a" style="left:367px;top:564px;width:28px;height:23px;background:#ee69ae"></div>
<div class="t fl" style="left:375.04px;top:567.90px;font-size:15px;line-height:15px;color:#fff;transform:scaleX(0.8850)">f<span style="letter-spacing:-1.73px">...</span></div>
<div class="a" style="left:396px;top:564px;width:3px;height:23px;background:#4db85c"></div>
<div class="a" style="left:399px;top:564px;width:44px;height:23px;background:#ee69ae"></div>
<div class="t fl" style="left:409.87px;top:567.90px;font-size:15px;line-height:15px;color:#fff;transform:scaleX(0.8850)">fin<span style="letter-spacing:-1.73px">...</span></div>
<div class="a" style="left:452px;top:564px;width:69px;height:23px;background:#3aa98c"></div>
<div class="t fl" style="left:462.46px;top:567.90px;font-size:15px;line-height:15px;color:#fff;transform:scaleX(0.8850)">proces<span style="letter-spacing:-1.73px">...</span></div>
<div class="a" style="left:528px;top:564px;width:6px;height:23px;background:#ee69ae"></div>
<div class="a" style="left:338px;top:587px;width:3px;height:23px;background:#4db85c"></div>
<div class="a" style="left:341px;top:587px;width:13px;height:23px;background:#ee69ae"></div>
<div class="a" style="left:357px;top:587px;width:9px;height:23px;background:#ee69ae"></div>
<div class="a" style="left:366px;top:587px;width:10px;height:23px;background:#ee69ae"></div>
<div class="a" style="left:376px;top:587px;width:3px;height:23px;background:#4db85c"></div>
<div class="a" style="left:379px;top:587px;width:16px;height:23px;background:#ee69ae"></div>
<div class="t fl" style="left:385.15px;top:590.90px;font-size:15px;line-height:15px;color:#fff;transform:scaleX(0.8850)">f</div>
<div class="a" style="left:399px;top:587px;width:44px;height:23px;background:#ee69ae"></div>
<div class="t fl" style="left:409.87px;top:590.90px;font-size:15px;line-height:15px;color:#fff;transform:scaleX(0.8850)">fin<span style="letter-spacing:-1.73px">...</span></div>
<div class="a" style="left:453px;top:587px;width:68px;height:23px;background:#ee69ae"></div>
<div class="t fl" style="left:464.06px;top:590.90px;font-size:15px;line-height:15px;color:#fff;transform:scaleX(0.8850)">findSo<span style="letter-spacing:-1.73px">...</span></div>
<div class="a" style="left:528px;top:587px;width:5px;height:23px;background:#ee69ae"></div>
<div class="a" style="left:341px;top:610px;width:2px;height:23px;background:#b0a3aa"></div>
<div class="a" style="left:343px;top:610px;width:11px;height:23px;background:#ee69ae"></div>
<div class="a" style="left:358px;top:610px;width:3px;height:23px;background:#4db85c"></div>
<div class="a" style="left:361px;top:610px;width:4px;height:23px;background:#ee69ae"></div>
<div class="a" style="left:368px;top:610px;width:7px;height:23px;background:#ee69ae"></div>
<div class="a" style="left:375px;top:610px;width:4px;height:23px;background:#4db85c"></div>
<div class="a" style="left:379px;top:610px;width:16px;height:23px;background:#4db85c"></div>
<div class="t fl" style="left:383.68px;top:613.90px;font-size:15px;line-height:15px;color:#fff;transform:scaleX(0.8850)">c</div>
<div class="a" style="left:401px;top:610px;width:21px;height:23px;background:#ee69ae"></div>
<div class="t fl" style="left:405.54px;top:613.90px;font-size:15px;line-height:15px;color:#fff;transform:scaleX(0.8850)">f<span style="letter-spacing:-1.73px">...</span></div>
<div class="a" style="left:422px;top:610px;width:2px;height:23px;background:#b0a3aa"></div>
<div class="a" style="left:424px;top:610px;width:19px;height:23px;background:#ee69ae"></div>
<div class="t fl" style="left:431.65px;top:613.90px;font-size:15px;line-height:15px;color:#fff;transform:scaleX(0.8850)">f</div>
<div class="a" style="left:453px;top:610px;width:8px;height:23px;background:#ee69ae"></div>
<div class="a" style="left:461px;top:610px;width:18px;height:23px;background:#4db85c"></div>
<div class="a" style="left:482px;top:610px;width:14px;height:23px;background:#4db85c"></div>
<div class="a" style="left:496px;top:610px;width:3px;height:23px;background:#ee69ae"></div>
<div class="a" style="left:499px;top:610px;width:5px;height:23px;background:#4db85c"></div>
<div class="a" style="left:504px;top:610px;width:16px;height:23px;background:#ee69ae"></div>
<div class="t fl" style="left:510.15px;top:613.90px;font-size:15px;line-height:15px;color:#fff;transform:scaleX(0.8850)">f</div>
<div class="a" style="left:529px;top:610px;width:2px;height:23px;background:#4db85c"></div>
<div class="a" style="left:344px;top:633px;width:2px;height:23px;background:#4db85c"></div>
<div class="a" style="left:346px;top:633px;width:8px;height:23px;background:#ee69ae"></div>
<div class="a" style="left:361px;top:633px;width:5px;height:23px;background:#4db85c"></div>
<div class="a" style="left:368px;top:633px;width:2px;height:23px;background:#4db85c"></div>
<div class="a" style="left:371px;top:633px;width:3px;height:23px;background:#4db85c"></div>
<div class="a" style="left:401px;top:633px;width:21px;height:23px;background:#ee69ae"></div>
<div class="t fl" style="left:409.65px;top:636.90px;font-size:15px;line-height:15px;color:#fff;transform:scaleX(0.8850)">f</div>
<div class="a" style="left:422px;top:633px;width:2px;height:23px;background:#b0a3aa"></div>
<div class="a" style="left:424px;top:633px;width:19px;height:23px;background:#ee69ae"></div>
<div class="t fl" style="left:431.65px;top:636.90px;font-size:15px;line-height:15px;color:#fff;transform:scaleX(0.8850)">f</div>
<div class="a" style="left:454px;top:633px;width:7px;height:23px;background:#ee69ae"></div>
<div class="a" style="left:463px;top:633px;width:2px;height:23px;background:#4db85c"></div>
<div class="a" style="left:472px;top:633px;width:2px;height:23px;background:#4db85c"></div>
<div class="a" style="left:480px;top:633px;width:2px;height:23px;background:#4db85c"></div>
<div class="a" style="left:488px;top:633px;width:2px;height:23px;background:#4db85c"></div>
<div class="a" style="left:496px;top:633px;width:3px;height:23px;background:#4db85c"></div>
<div class="a" style="left:504px;top:633px;width:15px;height:23px;background:#ee69ae"></div>
<div class="a" style="left:519px;top:633px;width:2px;height:23px;background:#4db85c"></div>
<div class="a" style="left:346px;top:656px;width:6px;height:23px;background:#4db85c"></div>
<div class="a" style="left:401px;top:656px;width:21px;height:23px;background:#ee69ae"></div>
<div class="t fl" style="left:409.65px;top:659.90px;font-size:15px;line-height:15px;color:#fff;transform:scaleX(0.8850)">f</div>
<div class="a" style="left:424px;top:656px;width:19px;height:23px;background:#ee69ae"></div>
<div class="t fl" style="left:431.65px;top:659.90px;font-size:15px;line-height:15px;color:#fff;transform:scaleX(0.8850)">f</div>
<div class="a" style="left:455px;top:656px;width:3px;height:23px;background:#ee69ae"></div>
<div class="a" style="left:458px;top:656px;width:4px;height:23px;background:#4db85c"></div>
<div class="a" style="left:505px;top:656px;width:13px;height:23px;background:#ee69ae"></div>
<div class="a" style="left:351px;top:679px;width:2px;height:23px;background:#b0a3aa"></div>
<div class="a" style="left:402px;top:679px;width:20px;height:23px;background:#ee69ae"></div>
<div class="t fl" style="left:410.15px;top:682.90px;font-size:15px;line-height:15px;color:#fff;transform:scaleX(0.8850)">f</div>
<div class="a" style="left:424px;top:679px;width:18px;height:23px;background:#ee69ae"></div>
<div class="t fl" style="left:431.15px;top:682.90px;font-size:15px;line-height:15px;color:#fff;transform:scaleX(0.8850)">f</div>
<div class="a" style="left:456px;top:679px;width:2px;height:23px;background:#ee69ae"></div>
<div class="a" style="left:505px;top:679px;width:13px;height:23px;background:#ee69ae"></div>
<div class="a" style="left:402px;top:702px;width:20px;height:23px;background:#ee69ae"></div>
<div class="t fl" style="left:410.15px;top:705.90px;font-size:15px;line-height:15px;color:#fff;transform:scaleX(0.8850)">f</div>
<div class="a" style="left:424px;top:702px;width:18px;height:23px;background:#ee69ae"></div>
<div class="t fl" style="left:431.15px;top:705.90px;font-size:15px;line-height:15px;color:#fff;transform:scaleX(0.8850)">f</div>
<div class="a" style="left:456px;top:702px;width:2px;height:23px;background:#4db85c"></div>
<div class="a" style="left:505px;top:702px;width:12px;height:23px;background:#ee69ae"></div>
<div class="a" style="left:403px;top:725px;width:19px;height:23px;background:#ee69ae"></div>
<div class="t fl" style="left:410.65px;top:728.90px;font-size:15px;line-height:15px;color:#fff;transform:scaleX(0.8850)">f</div>
<div class="a" style="left:424px;top:725px;width:18px;height:23px;background:#ee69ae"></div>
<div class="t fl" style="left:431.15px;top:728.90px;font-size:15px;line-height:15px;color:#fff;transform:scaleX(0.8850)">f</div>
<div class="a" style="left:505px;top:725px;width:11px;height:23px;background:#4db85c"></div>
<div class="a" style="left:403px;top:748px;width:19px;height:23px;background:#ee69ae"></div>
<div class="t fl" style="left:410.65px;top:751.90px;font-size:15px;line-height:15px;color:#fff;transform:scaleX(0.8850)">f</div>
<div class="a" style="left:424px;top:748px;width:18px;height:23px;background:#ee69ae"></div>
<div class="t fl" style="left:431.15px;top:751.90px;font-size:15px;line-height:15px;color:#fff;transform:scaleX(0.8850)">f</div>
<div class="a" style="left:404px;top:771px;width:18px;height:23px;background:#ee69ae"></div>
<div class="t fl" style="left:411.15px;top:774.90px;font-size:15px;line-height:15px;color:#fff;transform:scaleX(0.8850)">f</div>
<div class="a" style="left:425px;top:771px;width:16px;height:23px;background:#ee69ae"></div>
<div class="a" style="left:404px;top:794px;width:18px;height:23px;background:#ee69ae"></div>
<div class="t fl" style="left:411.15px;top:797.90px;font-size:15px;line-height:15px;color:#fff;transform:scaleX(0.8850)">f</div>
<div class="a" style="left:425px;top:794px;width:16px;height:23px;background:#ee69ae"></div>
<div class="a" style="left:404px;top:817px;width:18px;height:23px;background:#ee69ae"></div>
<div class="t fl" style="left:411.15px;top:820.90px;font-size:15px;line-height:15px;color:#fff;transform:scaleX(0.8850)">f</div>
<div class="a" style="left:425px;top:817px;width:16px;height:23px;background:#ee69ae"></div>
<div class="a" style="left:404px;top:840px;width:18px;height:23px;background:#ee69ae"></div>
<div class="t fl" style="left:411.15px;top:843.90px;font-size:15px;line-height:15px;color:#fff;transform:scaleX(0.8850)">f</div>
<div class="a" style="left:425px;top:840px;width:16px;height:23px;background:#ee69ae"></div>
<div class="a" style="left:404px;top:863px;width:18px;height:23px;background:#ee69ae"></div>
<div class="t fl" style="left:411.15px;top:866.90px;font-size:15px;line-height:15px;color:#fff;transform:scaleX(0.8850)">f</div>
<div class="a" style="left:425px;top:863px;width:16px;height:23px;background:#ee69ae"></div>
<div class="a" style="left:404px;top:886px;width:18px;height:23px;background:#ee69ae"></div>
<div class="t fl" style="left:411.15px;top:889.90px;font-size:15px;line-height:15px;color:#fff;transform:scaleX(0.8850)">f</div>
<div class="a" style="left:432px;top:886px;width:9px;height:23px;background:#4db85c"></div>
<div class="a" style="left:406px;top:909px;width:15px;height:23px;background:#ee69ae"></div>
<div class="a" style="left:406px;top:932px;width:15px;height:23px;background:#ee69ae"></div>
<div class="a" style="left:406px;top:955px;width:15px;height:23px;background:#ee69ae"></div>
<div class="a" style="left:409px;top:978px;width:12px;height:23px;background:#4db85c"></div>
<div class="a" style="left:415px;top:1000px;width:1.5px;height:45px;background:#b09aa5;"></div>
<div class="a" style="left:440px;top:907px;width:1px;height:23px;background:#7fc58a;"></div>
<div class="a" style="left:352px;top:680px;width:1px;height:20px;background:#7fc58a;"></div>
<div class="a" style="left:457px;top:680px;width:1.5px;height:43px;background:#a9a0a0;"></div>
<div class="a" style="left:626px;top:426px;width:750px;height:23px;background:#4f8a92"></div>
<div class="t fl" style="left:951.94px;top:429.90px;font-size:15px;line-height:15px;color:#fff;transform:scaleX(0.8850)">checkSourceFile</div>
<div class="a" style="left:1376px;top:426px;width:822px;height:23px;background:#3d6677"></div>
<div class="t fl" style="left:1737.94px;top:429.90px;font-size:15px;line-height:15px;color:#fff;transform:scaleX(0.8850)">checkSourceFile</div>
<div class="a" style="left:627px;top:449px;width:81px;height:23px;background:#5aa4da"></div>
<div class="t fl" style="left:636.21px;top:452.90px;font-size:15px;line-height:15px;color:#fff;transform:scaleX(0.8850)">checkVar<span style="letter-spacing:-1.73px">...</span></div>
<div class="a" style="left:708px;top:449px;width:79px;height:23px;background:#5aa4da"></div>
<div class="t fl" style="left:716.21px;top:452.90px;font-size:15px;line-height:15px;color:#fff;transform:scaleX(0.8850)">checkVar<span style="letter-spacing:-1.73px">...</span></div>
<div class="a" style="left:708px;top:449px;width:0.8px;height:23px;background:rgba(60,110,160,.35);"></div>
<div class="a" style="left:787px;top:449px;width:53px;height:23px;background:#5aa4da"></div>
<div class="t fl" style="left:792.04px;top:452.90px;font-size:15px;line-height:15px;color:#fff;transform:scaleX(0.8850)">check<span style="letter-spacing:-1.73px">...</span></div>
<div class="a" style="left:787px;top:449px;width:0.8px;height:23px;background:rgba(60,110,160,.35);"></div>
<div class="a" style="left:840px;top:449px;width:49px;height:23px;background:#5aa4da"></div>
<div class="t fl" style="left:846.36px;top:452.90px;font-size:15px;line-height:15px;color:#fff;transform:scaleX(0.8850)">chec<span style="letter-spacing:-1.73px">...</span></div>
<div class="a" style="left:840px;top:449px;width:0.8px;height:23px;background:rgba(60,110,160,.35);"></div>
<div class="a" style="left:889px;top:449px;width:65px;height:23px;background:#5aa4da"></div>
<div class="t fl" style="left:895.62px;top:452.90px;font-size:15px;line-height:15px;color:#fff;transform:scaleX(0.8850)">checkV<span style="letter-spacing:-1.73px">...</span></div>
<div class="a" style="left:889px;top:449px;width:0.8px;height:23px;background:rgba(60,110,160,.35);"></div>
<div class="a" style="left:954px;top:449px;width:47px;height:23px;background:#5aa4da"></div>
<div class="t fl" style="left:959.36px;top:452.90px;font-size:15px;line-height:15px;color:#fff;transform:scaleX(0.8850)">chec<span style="letter-spacing:-1.73px">...</span></div>
<div class="a" style="left:954px;top:449px;width:0.8px;height:23px;background:rgba(60,110,160,.35);"></div>
<div class="a" style="left:1001px;top:449px;width:47px;height:23px;background:#5aa4da"></div>
<div class="t fl" style="left:1006.36px;top:452.90px;font-size:15px;line-height:15px;color:#fff;transform:scaleX(0.8850)">chec<span style="letter-spacing:-1.73px">...</span></div>
<div class="a" style="left:1001px;top:449px;width:0.8px;height:23px;background:rgba(60,110,160,.35);"></div>
<div class="a" style="left:1048px;top:449px;width:45px;height:23px;background:#5aa4da"></div>
<div class="t fl" style="left:1052.36px;top:452.90px;font-size:15px;line-height:15px;color:#fff;transform:scaleX(0.8850)">chec<span style="letter-spacing:-1.73px">...</span></div>
<div class="a" style="left:1048px;top:449px;width:0.8px;height:23px;background:rgba(60,110,160,.35);"></div>
<div class="a" style="left:1093px;top:449px;width:45px;height:23px;background:#5aa4da"></div>
<div class="t fl" style="left:1097.36px;top:452.90px;font-size:15px;line-height:15px;color:#fff;transform:scaleX(0.8850)">chec<span style="letter-spacing:-1.73px">...</span></div>
<div class="a" style="left:1093px;top:449px;width:0.8px;height:23px;background:rgba(60,110,160,.35);"></div>
<div class="a" style="left:1138px;top:449px;width:43px;height:23px;background:#5aa4da"></div>
<div class="t fl" style="left:1144.68px;top:452.90px;font-size:15px;line-height:15px;color:#fff;transform:scaleX(0.8850)">che<span style="letter-spacing:-1.73px">...</span></div>
<div class="a" style="left:1138px;top:449px;width:0.8px;height:23px;background:rgba(60,110,160,.35);"></div>
<div class="a" style="left:1181px;top:449px;width:43px;height:23px;background:#5aa4da"></div>
<div class="t fl" style="left:1187.68px;top:452.90px;font-size:15px;line-height:15px;color:#fff;transform:scaleX(0.8850)">che<span style="letter-spacing:-1.73px">...</span></div>
<div class="a" style="left:1181px;top:449px;width:0.8px;height:23px;background:rgba(60,110,160,.35);"></div>
<div class="a" style="left:1224px;top:449px;width:152px;height:23px;background:#5aa4da"></div>
<div class="t fl" style="left:1237.72px;top:452.90px;font-size:15px;line-height:15px;color:#fff;transform:scaleX(0.8850)">checkVariableDecla<span style="letter-spacing:-1.73px">...</span></div>
<div class="a" style="left:1224px;top:449px;width:0.8px;height:23px;background:rgba(60,110,160,.35);"></div>
<div class="a" style="left:1376px;top:449px;width:822px;height:23px;background:#5aa4da"></div>
<div class="t fl" style="left:1712.22px;top:452.90px;font-size:15px;line-height:15px;color:#fff;transform:scaleX(0.8850)">checkVariableDeclaration</div>
<div class="a" style="left:1376px;top:472px;width:822px;height:23px;background:#9d52dd"></div>
<div class="t fl" style="left:1736.82px;top:475.90px;font-size:15px;line-height:15px;color:#fff;transform:scaleX(0.8850)">checkExpression</div>
<div class="a" style="left:628px;top:472px;width:4px;height:46px;background:#9d52dd"></div>
<div class="a" style="left:709px;top:472px;width:77px;height:23px;background:#9d52dd"></div>
<div class="t fl" style="left:714.61px;top:475.90px;font-size:15px;line-height:15px;color:#fff;transform:scaleX(0.8850)">checkExp<span style="letter-spacing:-1.73px">...</span></div>
<div class="a" style="left:709px;top:495px;width:76px;height:23px;background:#9d52dd"></div>
<div class="t fl" style="left:714.11px;top:498.90px;font-size:15px;line-height:15px;color:#fff;transform:scaleX(0.8850)">checkExp<span style="letter-spacing:-1.73px">...</span></div>
<div class="a" style="left:709px;top:518px;width:76px;height:23px;background:#9d52dd"></div>
<div class="t fl" style="left:714.11px;top:521.90px;font-size:15px;line-height:15px;color:#fff;transform:scaleX(0.8850)">checkExp<span style="letter-spacing:-1.73px">...</span></div>
<div class="a" style="left:709px;top:541px;width:75px;height:23px;background:#9d52dd"></div>
<div class="t fl" style="left:713.61px;top:544.90px;font-size:15px;line-height:15px;color:#fff;transform:scaleX(0.8850)">checkExp<span style="letter-spacing:-1.73px">...</span></div>
<div class="a" style="left:709px;top:564px;width:74px;height:23px;background:#9d52dd"></div>
<div class="t fl" style="left:713.11px;top:567.90px;font-size:15px;line-height:15px;color:#fff;transform:scaleX(0.8850)">checkExp<span style="letter-spacing:-1.73px">...</span></div>
<div class="a" style="left:709px;top:587px;width:73px;height:23px;background:#9d52dd"></div>
<div class="t fl" style="left:716.30px;top:590.90px;font-size:15px;line-height:15px;color:#fff;transform:scaleX(0.8850)">checkEx<span style="letter-spacing:-1.73px">...</span></div>
<div class="a" style="left:709px;top:610px;width:73px;height:23px;background:#9d52dd"></div>
<div class="t fl" style="left:716.30px;top:613.90px;font-size:15px;line-height:15px;color:#fff;transform:scaleX(0.8850)">checkEx<span style="letter-spacing:-1.73px">...</span></div>
<div class="a" style="left:709px;top:633px;width:72px;height:23px;background:#9d52dd"></div>
<div class="t fl" style="left:715.80px;top:636.90px;font-size:15px;line-height:15px;color:#fff;transform:scaleX(0.8850)">checkEx<span style="letter-spacing:-1.73px">...</span></div>
<div class="a" style="left:709px;top:656px;width:71px;height:23px;background:#9d52dd"></div>
<div class="t fl" style="left:715.30px;top:659.90px;font-size:15px;line-height:15px;color:#fff;transform:scaleX(0.8850)">checkEx<span style="letter-spacing:-1.73px">...</span></div>
<div class="a" style="left:709px;top:679px;width:71px;height:23px;background:#9d52dd"></div>
<div class="t fl" style="left:715.30px;top:682.90px;font-size:15px;line-height:15px;color:#fff;transform:scaleX(0.8850)">checkEx<span style="letter-spacing:-1.73px">...</span></div>
<div class="a" style="left:709px;top:702px;width:70px;height:23px;background:#9d52dd"></div>
<div class="t fl" style="left:714.80px;top:705.90px;font-size:15px;line-height:15px;color:#fff;transform:scaleX(0.8850)">checkEx<span style="letter-spacing:-1.73px">...</span></div>
<div class="a" style="left:709px;top:725px;width:69px;height:23px;background:#9d52dd"></div>
<div class="t fl" style="left:714.30px;top:728.90px;font-size:15px;line-height:15px;color:#fff;transform:scaleX(0.8850)">checkEx<span style="letter-spacing:-1.73px">...</span></div>
<div class="a" style="left:709px;top:748px;width:69px;height:23px;background:#9d52dd"></div>
<div class="t fl" style="left:714.30px;top:751.90px;font-size:15px;line-height:15px;color:#fff;transform:scaleX(0.8850)">checkEx<span style="letter-spacing:-1.73px">...</span></div>
<div class="a" style="left:709px;top:771px;width:68px;height:23px;background:#9d52dd"></div>
<div class="t fl" style="left:713.80px;top:774.90px;font-size:15px;line-height:15px;color:#fff;transform:scaleX(0.8850)">checkEx<span style="letter-spacing:-1.73px">...</span></div>
<div class="a" style="left:709px;top:794px;width:67px;height:23px;background:#9d52dd"></div>
<div class="t fl" style="left:713.30px;top:797.90px;font-size:15px;line-height:15px;color:#fff;transform:scaleX(0.8850)">checkEx<span style="letter-spacing:-1.73px">...</span></div>
<div class="a" style="left:709px;top:817px;width:66px;height:23px;background:#9d52dd"></div>
<div class="t fl" style="left:716.12px;top:820.90px;font-size:15px;line-height:15px;color:#fff;transform:scaleX(0.8850)">checkE<span style="letter-spacing:-1.73px">...</span></div>
<div class="a" style="left:709px;top:840px;width:66px;height:23px;background:#9d52dd"></div>
<div class="t fl" style="left:716.12px;top:843.90px;font-size:15px;line-height:15px;color:#fff;transform:scaleX(0.8850)">checkE<span style="letter-spacing:-1.73px">...</span></div>
<div class="a" style="left:709px;top:863px;width:65px;height:23px;background:#9d52dd"></div>
<div class="t fl" style="left:715.62px;top:866.90px;font-size:15px;line-height:15px;color:#fff;transform:scaleX(0.8850)">checkE<span style="letter-spacing:-1.73px">...</span></div>
<div class="a" style="left:709px;top:886px;width:64px;height:23px;background:#9d52dd"></div>
<div class="t fl" style="left:715.12px;top:889.90px;font-size:15px;line-height:15px;color:#fff;transform:scaleX(0.8850)">checkE<span style="letter-spacing:-1.73px">...</span></div>
<div class="a" style="left:709px;top:909px;width:64px;height:23px;background:#9d52dd"></div>
<div class="t fl" style="left:715.12px;top:912.90px;font-size:15px;line-height:15px;color:#fff;transform:scaleX(0.8850)">checkE<span style="letter-spacing:-1.73px">...</span></div>
<div class="a" style="left:709px;top:932px;width:63px;height:23px;background:#9d52dd"></div>
<div class="t fl" style="left:714.62px;top:935.90px;font-size:15px;line-height:15px;color:#fff;transform:scaleX(0.8850)">checkE<span style="letter-spacing:-1.73px">...</span></div>
<div class="a" style="left:709px;top:955px;width:62px;height:23px;background:#9d52dd"></div>
<div class="t fl" style="left:714.12px;top:958.90px;font-size:15px;line-height:15px;color:#fff;transform:scaleX(0.8850)">checkE<span style="letter-spacing:-1.73px">...</span></div>
<div class="a" style="left:709px;top:978px;width:61px;height:23px;background:#9d52dd"></div>
<div class="t fl" style="left:713.62px;top:981.90px;font-size:15px;line-height:15px;color:#fff;transform:scaleX(0.8850)">checkE<span style="letter-spacing:-1.73px">...</span></div>
<div class="a" style="left:709px;top:1001px;width:61px;height:23px;background:#9d52dd"></div>
<div class="t fl" style="left:713.62px;top:1004.90px;font-size:15px;line-height:15px;color:#fff;transform:scaleX(0.8850)">checkE<span style="letter-spacing:-1.73px">...</span></div>
<div class="a" style="left:709px;top:1024px;width:60px;height:23px;background:#9d52dd"></div>
<div class="t fl" style="left:713.12px;top:1027.90px;font-size:15px;line-height:15px;color:#fff;transform:scaleX(0.8850)">checkE<span style="letter-spacing:-1.73px">...</span></div>
<div class="a" style="left:788px;top:472px;width:49px;height:23px;background:#9d52dd"></div>
<div class="t fl" style="left:794.36px;top:475.90px;font-size:15px;line-height:15px;color:#fff;transform:scaleX(0.8850)">chec<span style="letter-spacing:-1.73px">...</span></div>
<div class="a" style="left:788px;top:495px;width:48px;height:23px;background:#9d52dd"></div>
<div class="t fl" style="left:793.86px;top:498.90px;font-size:15px;line-height:15px;color:#fff;transform:scaleX(0.8850)">chec<span style="letter-spacing:-1.73px">...</span></div>
<div class="a" style="left:788px;top:518px;width:48px;height:23px;background:#9d52dd"></div>
<div class="t fl" style="left:793.86px;top:521.90px;font-size:15px;line-height:15px;color:#fff;transform:scaleX(0.8850)">chec<span style="letter-spacing:-1.73px">...</span></div>
<div class="a" style="left:788px;top:541px;width:47px;height:23px;background:#9d52dd"></div>
<div class="t fl" style="left:793.36px;top:544.90px;font-size:15px;line-height:15px;color:#fff;transform:scaleX(0.8850)">chec<span style="letter-spacing:-1.73px">...</span></div>
<div class="a" style="left:788px;top:564px;width:46px;height:23px;background:#9d52dd"></div>
<div class="t fl" style="left:792.86px;top:567.90px;font-size:15px;line-height:15px;color:#fff;transform:scaleX(0.8850)">chec<span style="letter-spacing:-1.73px">...</span></div>
<div class="a" style="left:788px;top:587px;width:46px;height:23px;background:#9d52dd"></div>
<div class="t fl" style="left:792.86px;top:590.90px;font-size:15px;line-height:15px;color:#fff;transform:scaleX(0.8850)">chec<span style="letter-spacing:-1.73px">...</span></div>
<div class="a" style="left:788px;top:610px;width:45px;height:23px;background:#9d52dd"></div>
<div class="t fl" style="left:792.36px;top:613.90px;font-size:15px;line-height:15px;color:#fff;transform:scaleX(0.8850)">chec<span style="letter-spacing:-1.73px">...</span></div>
<div class="a" style="left:788px;top:633px;width:45px;height:23px;background:#9d52dd"></div>
<div class="t fl" style="left:792.36px;top:636.90px;font-size:15px;line-height:15px;color:#fff;transform:scaleX(0.8850)">chec<span style="letter-spacing:-1.73px">...</span></div>
<div class="a" style="left:788px;top:656px;width:44px;height:23px;background:#9d52dd"></div>
<div class="t fl" style="left:795.18px;top:659.90px;font-size:15px;line-height:15px;color:#fff;transform:scaleX(0.8850)">che<span style="letter-spacing:-1.73px">...</span></div>
<div class="a" style="left:788px;top:679px;width:43px;height:23px;background:#9d52dd"></div>
<div class="t fl" style="left:794.68px;top:682.90px;font-size:15px;line-height:15px;color:#fff;transform:scaleX(0.8850)">che<span style="letter-spacing:-1.73px">...</span></div>
<div class="a" style="left:788px;top:702px;width:43px;height:23px;background:#9d52dd"></div>
<div class="t fl" style="left:794.68px;top:705.90px;font-size:15px;line-height:15px;color:#fff;transform:scaleX(0.8850)">che<span style="letter-spacing:-1.73px">...</span></div>
<div class="a" style="left:788px;top:725px;width:42px;height:23px;background:#9d52dd"></div>
<div class="t fl" style="left:794.18px;top:728.90px;font-size:15px;line-height:15px;color:#fff;transform:scaleX(0.8850)">che<span style="letter-spacing:-1.73px">...</span></div>
<div class="a" style="left:788px;top:748px;width:42px;height:23px;background:#9d52dd"></div>
<div class="t fl" style="left:794.18px;top:751.90px;font-size:15px;line-height:15px;color:#fff;transform:scaleX(0.8850)">che<span style="letter-spacing:-1.73px">...</span></div>
<div class="a" style="left:788px;top:771px;width:41px;height:23px;background:#9d52dd"></div>
<div class="t fl" style="left:793.68px;top:774.90px;font-size:15px;line-height:15px;color:#fff;transform:scaleX(0.8850)">che<span style="letter-spacing:-1.73px">...</span></div>
<div class="a" style="left:788px;top:794px;width:40px;height:23px;background:#9d52dd"></div>
<div class="t fl" style="left:793.18px;top:797.90px;font-size:15px;line-height:15px;color:#fff;transform:scaleX(0.8850)">che<span style="letter-spacing:-1.73px">...</span></div>
<div class="a" style="left:788px;top:817px;width:40px;height:23px;background:#9d52dd"></div>
<div class="t fl" style="left:793.18px;top:820.90px;font-size:15px;line-height:15px;color:#fff;transform:scaleX(0.8850)">che<span style="letter-spacing:-1.73px">...</span></div>
<div class="a" style="left:788px;top:840px;width:39px;height:23px;background:#9d52dd"></div>
<div class="t fl" style="left:792.68px;top:843.90px;font-size:15px;line-height:15px;color:#fff;transform:scaleX(0.8850)">che<span style="letter-spacing:-1.73px">...</span></div>
<div class="a" style="left:788px;top:863px;width:38px;height:23px;background:#9d52dd"></div>
<div class="t fl" style="left:792.18px;top:866.90px;font-size:15px;line-height:15px;color:#fff;transform:scaleX(0.8850)">che<span style="letter-spacing:-1.73px">...</span></div>
<div class="a" style="left:788px;top:886px;width:38px;height:23px;background:#9d52dd"></div>
<div class="t fl" style="left:792.18px;top:889.90px;font-size:15px;line-height:15px;color:#fff;transform:scaleX(0.8850)">che<span style="letter-spacing:-1.73px">...</span></div>
<div class="a" style="left:788px;top:909px;width:37px;height:23px;background:#9d52dd"></div>
<div class="t fl" style="left:795.37px;top:912.90px;font-size:15px;line-height:15px;color:#fff;transform:scaleX(0.8850)">ch<span style="letter-spacing:-1.73px">...</span></div>
<div class="a" style="left:788px;top:932px;width:36px;height:23px;background:#9d52dd"></div>
<div class="t fl" style="left:794.87px;top:935.90px;font-size:15px;line-height:15px;color:#fff;transform:scaleX(0.8850)">ch<span style="letter-spacing:-1.73px">...</span></div>
<div class="a" style="left:788px;top:955px;width:36px;height:23px;background:#9d52dd"></div>
<div class="t fl" style="left:794.87px;top:958.90px;font-size:15px;line-height:15px;color:#fff;transform:scaleX(0.8850)">ch<span style="letter-spacing:-1.73px">...</span></div>
<div class="a" style="left:788px;top:978px;width:35px;height:23px;background:#9d52dd"></div>
<div class="t fl" style="left:794.37px;top:981.90px;font-size:15px;line-height:15px;color:#fff;transform:scaleX(0.8850)">ch<span style="letter-spacing:-1.73px">...</span></div>
<div class="a" style="left:788px;top:1001px;width:35px;height:23px;background:#9d52dd"></div>
<div class="t fl" style="left:794.37px;top:1004.90px;font-size:15px;line-height:15px;color:#fff;transform:scaleX(0.8850)">ch<span style="letter-spacing:-1.73px">...</span></div>
<div class="a" style="left:788px;top:1024px;width:34px;height:23px;background:#9d52dd"></div>
<div class="t fl" style="left:793.87px;top:1027.90px;font-size:15px;line-height:15px;color:#fff;transform:scaleX(0.8850)">ch<span style="letter-spacing:-1.73px">...</span></div>
<div class="a" style="left:841px;top:472px;width:46px;height:23px;background:#9d52dd"></div>
<div class="t fl" style="left:845.86px;top:475.90px;font-size:15px;line-height:15px;color:#fff;transform:scaleX(0.8850)">chec<span style="letter-spacing:-1.73px">...</span></div>
<div class="a" style="left:841px;top:495px;width:45px;height:23px;background:#9d52dd"></div>
<div class="t fl" style="left:845.36px;top:498.90px;font-size:15px;line-height:15px;color:#fff;transform:scaleX(0.8850)">chec<span style="letter-spacing:-1.73px">...</span></div>
<div class="a" style="left:841px;top:518px;width:45px;height:23px;background:#9d52dd"></div>
<div class="t fl" style="left:845.36px;top:521.90px;font-size:15px;line-height:15px;color:#fff;transform:scaleX(0.8850)">chec<span style="letter-spacing:-1.73px">...</span></div>
<div class="a" style="left:841px;top:541px;width:44px;height:23px;background:#9d52dd"></div>
<div class="t fl" style="left:848.18px;top:544.90px;font-size:15px;line-height:15px;color:#fff;transform:scaleX(0.8850)">che<span style="letter-spacing:-1.73px">...</span></div>
<div class="a" style="left:841px;top:564px;width:43px;height:23px;background:#9d52dd"></div>
<div class="t fl" style="left:847.68px;top:567.90px;font-size:15px;line-height:15px;color:#fff;transform:scaleX(0.8850)">che<span style="letter-spacing:-1.73px">...</span></div>
<div class="a" style="left:841px;top:587px;width:42px;height:23px;background:#9d52dd"></div>
<div class="t fl" style="left:847.18px;top:590.90px;font-size:15px;line-height:15px;color:#fff;transform:scaleX(0.8850)">che<span style="letter-spacing:-1.73px">...</span></div>
<div class="a" style="left:841px;top:610px;width:41px;height:23px;background:#9d52dd"></div>
<div class="t fl" style="left:846.68px;top:613.90px;font-size:15px;line-height:15px;color:#fff;transform:scaleX(0.8850)">che<span style="letter-spacing:-1.73px">...</span></div>
<div class="a" style="left:841px;top:633px;width:41px;height:23px;background:#9d52dd"></div>
<div class="t fl" style="left:846.68px;top:636.90px;font-size:15px;line-height:15px;color:#fff;transform:scaleX(0.8850)">che<span style="letter-spacing:-1.73px">...</span></div>
<div class="a" style="left:841px;top:656px;width:40px;height:23px;background:#9d52dd"></div>
<div class="t fl" style="left:846.18px;top:659.90px;font-size:15px;line-height:15px;color:#fff;transform:scaleX(0.8850)">che<span style="letter-spacing:-1.73px">...</span></div>
<div class="a" style="left:841px;top:679px;width:39px;height:23px;background:#9d52dd"></div>
<div class="t fl" style="left:845.68px;top:682.90px;font-size:15px;line-height:15px;color:#fff;transform:scaleX(0.8850)">che<span style="letter-spacing:-1.73px">...</span></div>
<div class="a" style="left:841px;top:702px;width:39px;height:23px;background:#9d52dd"></div>
<div class="t fl" style="left:845.68px;top:705.90px;font-size:15px;line-height:15px;color:#fff;transform:scaleX(0.8850)">che<span style="letter-spacing:-1.73px">...</span></div>
<div class="a" style="left:841px;top:725px;width:38px;height:23px;background:#9d52dd"></div>
<div class="t fl" style="left:845.18px;top:728.90px;font-size:15px;line-height:15px;color:#fff;transform:scaleX(0.8850)">che<span style="letter-spacing:-1.73px">...</span></div>
<div class="a" style="left:841px;top:748px;width:37px;height:23px;background:#9d52dd"></div>
<div class="t fl" style="left:848.37px;top:751.90px;font-size:15px;line-height:15px;color:#fff;transform:scaleX(0.8850)">ch<span style="letter-spacing:-1.73px">...</span></div>
<div class="a" style="left:841px;top:771px;width:36px;height:23px;background:#9d52dd"></div>
<div class="t fl" style="left:847.87px;top:774.90px;font-size:15px;line-height:15px;color:#fff;transform:scaleX(0.8850)">ch<span style="letter-spacing:-1.73px">...</span></div>
<div class="a" style="left:841px;top:794px;width:35px;height:23px;background:#9d52dd"></div>
<div class="t fl" style="left:847.37px;top:797.90px;font-size:15px;line-height:15px;color:#fff;transform:scaleX(0.8850)">ch<span style="letter-spacing:-1.73px">...</span></div>
<div class="a" style="left:841px;top:817px;width:35px;height:23px;background:#9d52dd"></div>
<div class="t fl" style="left:847.37px;top:820.90px;font-size:15px;line-height:15px;color:#fff;transform:scaleX(0.8850)">ch<span style="letter-spacing:-1.73px">...</span></div>
<div class="a" style="left:841px;top:840px;width:34px;height:23px;background:#9d52dd"></div>
<div class="t fl" style="left:846.87px;top:843.90px;font-size:15px;line-height:15px;color:#fff;transform:scaleX(0.8850)">ch<span style="letter-spacing:-1.73px">...</span></div>
<div class="a" style="left:841px;top:863px;width:33px;height:23px;background:#9d52dd"></div>
<div class="t fl" style="left:846.37px;top:866.90px;font-size:15px;line-height:15px;color:#fff;transform:scaleX(0.8850)">ch<span style="letter-spacing:-1.73px">...</span></div>
<div class="a" style="left:841px;top:886px;width:33px;height:23px;background:#9d52dd"></div>
<div class="t fl" style="left:846.37px;top:889.90px;font-size:15px;line-height:15px;color:#fff;transform:scaleX(0.8850)">ch<span style="letter-spacing:-1.73px">...</span></div>
<div class="a" style="left:841px;top:909px;width:32px;height:23px;background:#9d52dd"></div>
<div class="t fl" style="left:845.87px;top:912.90px;font-size:15px;line-height:15px;color:#fff;transform:scaleX(0.8850)">ch<span style="letter-spacing:-1.73px">...</span></div>
<div class="a" style="left:841px;top:932px;width:31px;height:23px;background:#9d52dd"></div>
<div class="t fl" style="left:845.37px;top:935.90px;font-size:15px;line-height:15px;color:#fff;transform:scaleX(0.8850)">ch<span style="letter-spacing:-1.73px">...</span></div>
<div class="a" style="left:841px;top:955px;width:30px;height:23px;background:#9d52dd"></div>
<div class="t fl" style="left:844.87px;top:958.90px;font-size:15px;line-height:15px;color:#fff;transform:scaleX(0.8850)">ch<span style="letter-spacing:-1.73px">...</span></div>
<div class="a" style="left:841px;top:978px;width:29px;height:23px;background:#9d52dd"></div>
<div class="t fl" style="left:848.07px;top:981.90px;font-size:15px;line-height:15px;color:#fff;transform:scaleX(0.8850)">c<span style="letter-spacing:-1.73px">...</span></div>
<div class="a" style="left:841px;top:1001px;width:29px;height:23px;background:#9d52dd"></div>
<div class="t fl" style="left:848.07px;top:1004.90px;font-size:15px;line-height:15px;color:#fff;transform:scaleX(0.8850)">c<span style="letter-spacing:-1.73px">...</span></div>
<div class="a" style="left:841px;top:1024px;width:28px;height:23px;background:#9d52dd"></div>
<div class="t fl" style="left:847.57px;top:1027.90px;font-size:15px;line-height:15px;color:#fff;transform:scaleX(0.8850)">c<span style="letter-spacing:-1.73px">...</span></div>
<div class="a" style="left:888px;top:472px;width:65px;height:23px;background:#9d52dd"></div>
<div class="t fl" style="left:894.62px;top:475.90px;font-size:15px;line-height:15px;color:#fff;transform:scaleX(0.8850)">checkE<span style="letter-spacing:-1.73px">...</span></div>
<div class="a" style="left:888px;top:495px;width:64px;height:23px;background:#9d52dd"></div>
<div class="t fl" style="left:894.12px;top:498.90px;font-size:15px;line-height:15px;color:#fff;transform:scaleX(0.8850)">checkE<span style="letter-spacing:-1.73px">...</span></div>
<div class="a" style="left:888px;top:518px;width:63px;height:23px;background:#9d52dd"></div>
<div class="t fl" style="left:893.62px;top:521.90px;font-size:15px;line-height:15px;color:#fff;transform:scaleX(0.8850)">checkE<span style="letter-spacing:-1.73px">...</span></div>
<div class="a" style="left:888px;top:541px;width:63px;height:23px;background:#9d52dd"></div>
<div class="t fl" style="left:893.62px;top:544.90px;font-size:15px;line-height:15px;color:#fff;transform:scaleX(0.8850)">checkE<span style="letter-spacing:-1.73px">...</span></div>
<div class="a" style="left:888px;top:564px;width:62px;height:23px;background:#9d52dd"></div>
<div class="t fl" style="left:893.12px;top:567.90px;font-size:15px;line-height:15px;color:#fff;transform:scaleX(0.8850)">checkE<span style="letter-spacing:-1.73px">...</span></div>
<div class="a" style="left:888px;top:587px;width:61px;height:23px;background:#9d52dd"></div>
<div class="t fl" style="left:892.62px;top:590.90px;font-size:15px;line-height:15px;color:#fff;transform:scaleX(0.8850)">checkE<span style="letter-spacing:-1.73px">...</span></div>
<div class="a" style="left:888px;top:610px;width:60px;height:23px;background:#9d52dd"></div>
<div class="t fl" style="left:892.12px;top:613.90px;font-size:15px;line-height:15px;color:#fff;transform:scaleX(0.8850)">checkE<span style="letter-spacing:-1.73px">...</span></div>
<div class="a" style="left:888px;top:633px;width:59px;height:23px;background:#9d52dd"></div>
<div class="t fl" style="left:896.04px;top:636.90px;font-size:15px;line-height:15px;color:#fff;transform:scaleX(0.8850)">check<span style="letter-spacing:-1.73px">...</span></div>
<div class="a" style="left:888px;top:656px;width:59px;height:23px;background:#9d52dd"></div>
<div class="t fl" style="left:896.04px;top:659.90px;font-size:15px;line-height:15px;color:#fff;transform:scaleX(0.8850)">check<span style="letter-spacing:-1.73px">...</span></div>
<div class="a" style="left:888px;top:679px;width:58px;height:23px;background:#9d52dd"></div>
<div class="t fl" style="left:895.54px;top:682.90px;font-size:15px;line-height:15px;color:#fff;transform:scaleX(0.8850)">check<span style="letter-spacing:-1.73px">...</span></div>
<div class="a" style="left:888px;top:702px;width:57px;height:23px;background:#9d52dd"></div>
<div class="t fl" style="left:895.04px;top:705.90px;font-size:15px;line-height:15px;color:#fff;transform:scaleX(0.8850)">check<span style="letter-spacing:-1.73px">...</span></div>
<div class="a" style="left:888px;top:725px;width:56px;height:23px;background:#9d52dd"></div>
<div class="t fl" style="left:894.54px;top:728.90px;font-size:15px;line-height:15px;color:#fff;transform:scaleX(0.8850)">check<span style="letter-spacing:-1.73px">...</span></div>
<div class="a" style="left:888px;top:748px;width:56px;height:23px;background:#9d52dd"></div>
<div class="t fl" style="left:894.54px;top:751.90px;font-size:15px;line-height:15px;color:#fff;transform:scaleX(0.8850)">check<span style="letter-spacing:-1.73px">...</span></div>
<div class="a" style="left:888px;top:771px;width:55px;height:23px;background:#9d52dd"></div>
<div class="t fl" style="left:894.04px;top:774.90px;font-size:15px;line-height:15px;color:#fff;transform:scaleX(0.8850)">check<span style="letter-spacing:-1.73px">...</span></div>
<div class="a" style="left:888px;top:794px;width:54px;height:23px;background:#9d52dd"></div>
<div class="t fl" style="left:893.54px;top:797.90px;font-size:15px;line-height:15px;color:#fff;transform:scaleX(0.8850)">check<span style="letter-spacing:-1.73px">...</span></div>
<div class="a" style="left:888px;top:817px;width:53px;height:23px;background:#9d52dd"></div>
<div class="t fl" style="left:893.04px;top:820.90px;font-size:15px;line-height:15px;color:#fff;transform:scaleX(0.8850)">check<span style="letter-spacing:-1.73px">...</span></div>
<div class="a" style="left:888px;top:840px;width:52px;height:23px;background:#9d52dd"></div>
<div class="t fl" style="left:892.54px;top:843.90px;font-size:15px;line-height:15px;color:#fff;transform:scaleX(0.8850)">check<span style="letter-spacing:-1.73px">...</span></div>
<div class="a" style="left:888px;top:863px;width:52px;height:23px;background:#9d52dd"></div>
<div class="t fl" style="left:892.54px;top:866.90px;font-size:15px;line-height:15px;color:#fff;transform:scaleX(0.8850)">check<span style="letter-spacing:-1.73px">...</span></div>
<div class="a" style="left:888px;top:886px;width:51px;height:23px;background:#9d52dd"></div>
<div class="t fl" style="left:895.36px;top:889.90px;font-size:15px;line-height:15px;color:#fff;transform:scaleX(0.8850)">chec<span style="letter-spacing:-1.73px">...</span></div>
<div class="a" style="left:888px;top:909px;width:50px;height:23px;background:#9d52dd"></div>
<div class="t fl" style="left:894.86px;top:912.90px;font-size:15px;line-height:15px;color:#fff;transform:scaleX(0.8850)">chec<span style="letter-spacing:-1.73px">...</span></div>
<div class="a" style="left:888px;top:932px;width:49px;height:23px;background:#9d52dd"></div>
<div class="t fl" style="left:894.36px;top:935.90px;font-size:15px;line-height:15px;color:#fff;transform:scaleX(0.8850)">chec<span style="letter-spacing:-1.73px">...</span></div>
<div class="a" style="left:888px;top:955px;width:48px;height:23px;background:#9d52dd"></div>
<div class="t fl" style="left:893.86px;top:958.90px;font-size:15px;line-height:15px;color:#fff;transform:scaleX(0.8850)">chec<span style="letter-spacing:-1.73px">...</span></div>
<div class="a" style="left:888px;top:978px;width:48px;height:23px;background:#9d52dd"></div>
<div class="t fl" style="left:893.86px;top:981.90px;font-size:15px;line-height:15px;color:#fff;transform:scaleX(0.8850)">chec<span style="letter-spacing:-1.73px">...</span></div>
<div class="a" style="left:888px;top:1001px;width:47px;height:23px;background:#9d52dd"></div>
<div class="t fl" style="left:893.36px;top:1004.90px;font-size:15px;line-height:15px;color:#fff;transform:scaleX(0.8850)">chec<span style="letter-spacing:-1.73px">...</span></div>
<div class="a" style="left:888px;top:1024px;width:46px;height:23px;background:#9d52dd"></div>
<div class="t fl" style="left:892.86px;top:1027.90px;font-size:15px;line-height:15px;color:#fff;transform:scaleX(0.8850)">chec<span style="letter-spacing:-1.73px">...</span></div>
<div class="a" style="left:956px;top:472px;width:44px;height:23px;background:#9d52dd"></div>
<div class="t fl" style="left:963.18px;top:475.90px;font-size:15px;line-height:15px;color:#fff;transform:scaleX(0.8850)">che<span style="letter-spacing:-1.73px">...</span></div>
<div class="a" style="left:956px;top:495px;width:43px;height:23px;background:#9d52dd"></div>
<div class="t fl" style="left:962.68px;top:498.90px;font-size:15px;line-height:15px;color:#fff;transform:scaleX(0.8850)">che<span style="letter-spacing:-1.73px">...</span></div>
<div class="a" style="left:956px;top:518px;width:43px;height:23px;background:#9d52dd"></div>
<div class="t fl" style="left:962.68px;top:521.90px;font-size:15px;line-height:15px;color:#fff;transform:scaleX(0.8850)">che<span style="letter-spacing:-1.73px">...</span></div>
<div class="a" style="left:956px;top:541px;width:42px;height:23px;background:#9d52dd"></div>
<div class="t fl" style="left:962.18px;top:544.90px;font-size:15px;line-height:15px;color:#fff;transform:scaleX(0.8850)">che<span style="letter-spacing:-1.73px">...</span></div>
<div class="a" style="left:956px;top:564px;width:41px;height:23px;background:#9d52dd"></div>
<div class="t fl" style="left:961.68px;top:567.90px;font-size:15px;line-height:15px;color:#fff;transform:scaleX(0.8850)">che<span style="letter-spacing:-1.73px">...</span></div>
<div class="a" style="left:956px;top:587px;width:41px;height:23px;background:#9d52dd"></div>
<div class="t fl" style="left:961.68px;top:590.90px;font-size:15px;line-height:15px;color:#fff;transform:scaleX(0.8850)">che<span style="letter-spacing:-1.73px">...</span></div>
<div class="a" style="left:956px;top:610px;width:40px;height:23px;background:#9d52dd"></div>
<div class="t fl" style="left:961.18px;top:613.90px;font-size:15px;line-height:15px;color:#fff;transform:scaleX(0.8850)">che<span style="letter-spacing:-1.73px">...</span></div>
<div class="a" style="left:956px;top:633px;width:39px;height:23px;background:#9d52dd"></div>
<div class="t fl" style="left:960.68px;top:636.90px;font-size:15px;line-height:15px;color:#fff;transform:scaleX(0.8850)">che<span style="letter-spacing:-1.73px">...</span></div>
<div class="a" style="left:956px;top:656px;width:39px;height:23px;background:#9d52dd"></div>
<div class="t fl" style="left:960.68px;top:659.90px;font-size:15px;line-height:15px;color:#fff;transform:scaleX(0.8850)">che<span style="letter-spacing:-1.73px">...</span></div>
<div class="a" style="left:956px;top:679px;width:38px;height:23px;background:#9d52dd"></div>
<div class="t fl" style="left:960.18px;top:682.90px;font-size:15px;line-height:15px;color:#fff;transform:scaleX(0.8850)">che<span style="letter-spacing:-1.73px">...</span></div>
<div class="a" style="left:956px;top:702px;width:37px;height:23px;background:#9d52dd"></div>
<div class="t fl" style="left:963.37px;top:705.90px;font-size:15px;line-height:15px;color:#fff;transform:scaleX(0.8850)">ch<span style="letter-spacing:-1.73px">...</span></div>
<div class="a" style="left:956px;top:725px;width:37px;height:23px;background:#9d52dd"></div>
<div class="t fl" style="left:963.37px;top:728.90px;font-size:15px;line-height:15px;color:#fff;transform:scaleX(0.8850)">ch<span style="letter-spacing:-1.73px">...</span></div>
<div class="a" style="left:956px;top:748px;width:36px;height:23px;background:#9d52dd"></div>
<div class="t fl" style="left:962.87px;top:751.90px;font-size:15px;line-height:15px;color:#fff;transform:scaleX(0.8850)">ch<span style="letter-spacing:-1.73px">...</span></div>
<div class="a" style="left:956px;top:771px;width:35px;height:23px;background:#9d52dd"></div>
<div class="t fl" style="left:962.37px;top:774.90px;font-size:15px;line-height:15px;color:#fff;transform:scaleX(0.8850)">ch<span style="letter-spacing:-1.73px">...</span></div>
<div class="a" style="left:956px;top:794px;width:35px;height:23px;background:#9d52dd"></div>
<div class="t fl" style="left:962.37px;top:797.90px;font-size:15px;line-height:15px;color:#fff;transform:scaleX(0.8850)">ch<span style="letter-spacing:-1.73px">...</span></div>
<div class="a" style="left:956px;top:817px;width:34px;height:23px;background:#9d52dd"></div>
<div class="t fl" style="left:961.87px;top:820.90px;font-size:15px;line-height:15px;color:#fff;transform:scaleX(0.8850)">ch<span style="letter-spacing:-1.73px">...</span></div>
<div class="a" style="left:956px;top:840px;width:33px;height:23px;background:#9d52dd"></div>
<div class="t fl" style="left:961.37px;top:843.90px;font-size:15px;line-height:15px;color:#fff;transform:scaleX(0.8850)">ch<span style="letter-spacing:-1.73px">...</span></div>
<div class="a" style="left:956px;top:863px;width:33px;height:23px;background:#9d52dd"></div>
<div class="t fl" style="left:961.37px;top:866.90px;font-size:15px;line-height:15px;color:#fff;transform:scaleX(0.8850)">ch<span style="letter-spacing:-1.73px">...</span></div>
<div class="a" style="left:956px;top:886px;width:32px;height:23px;background:#9d52dd"></div>
<div class="t fl" style="left:960.87px;top:889.90px;font-size:15px;line-height:15px;color:#fff;transform:scaleX(0.8850)">ch<span style="letter-spacing:-1.73px">...</span></div>
<div class="a" style="left:956px;top:909px;width:31px;height:23px;background:#9d52dd"></div>
<div class="t fl" style="left:960.37px;top:912.90px;font-size:15px;line-height:15px;color:#fff;transform:scaleX(0.8850)">ch<span style="letter-spacing:-1.73px">...</span></div>
<div class="a" style="left:956px;top:932px;width:31px;height:23px;background:#9d52dd"></div>
<div class="t fl" style="left:960.37px;top:935.90px;font-size:15px;line-height:15px;color:#fff;transform:scaleX(0.8850)">ch<span style="letter-spacing:-1.73px">...</span></div>
<div class="a" style="left:956px;top:955px;width:30px;height:23px;background:#9d52dd"></div>
<div class="t fl" style="left:959.87px;top:958.90px;font-size:15px;line-height:15px;color:#fff;transform:scaleX(0.8850)">ch<span style="letter-spacing:-1.73px">...</span></div>
<div class="a" style="left:956px;top:978px;width:29px;height:23px;background:#9d52dd"></div>
<div class="t fl" style="left:963.07px;top:981.90px;font-size:15px;line-height:15px;color:#fff;transform:scaleX(0.8850)">c<span style="letter-spacing:-1.73px">...</span></div>
<div class="a" style="left:956px;top:1001px;width:29px;height:23px;background:#9d52dd"></div>
<div class="t fl" style="left:963.07px;top:1004.90px;font-size:15px;line-height:15px;color:#fff;transform:scaleX(0.8850)">c<span style="letter-spacing:-1.73px">...</span></div>
<div class="a" style="left:956px;top:1024px;width:28px;height:23px;background:#9d52dd"></div>
<div class="t fl" style="left:962.57px;top:1027.90px;font-size:15px;line-height:15px;color:#fff;transform:scaleX(0.8850)">c<span style="letter-spacing:-1.73px">...</span></div>
<div class="a" style="left:1002px;top:472px;width:45px;height:23px;background:#9d52dd"></div>
<div class="t fl" style="left:1006.36px;top:475.90px;font-size:15px;line-height:15px;color:#fff;transform:scaleX(0.8850)">chec<span style="letter-spacing:-1.73px">...</span></div>
<div class="a" style="left:1002px;top:495px;width:44px;height:23px;background:#9d52dd"></div>
<div class="t fl" style="left:1009.18px;top:498.90px;font-size:15px;line-height:15px;color:#fff;transform:scaleX(0.8850)">che<span style="letter-spacing:-1.73px">...</span></div>
<div class="a" style="left:1002px;top:518px;width:44px;height:23px;background:#9d52dd"></div>
<div class="t fl" style="left:1009.18px;top:521.90px;font-size:15px;line-height:15px;color:#fff;transform:scaleX(0.8850)">che<span style="letter-spacing:-1.73px">...</span></div>
<div class="a" style="left:1002px;top:541px;width:43px;height:23px;background:#9d52dd"></div>
<div class="t fl" style="left:1008.68px;top:544.90px;font-size:15px;line-height:15px;color:#fff;transform:scaleX(0.8850)">che<span style="letter-spacing:-1.73px">...</span></div>
<div class="a" style="left:1002px;top:564px;width:43px;height:23px;background:#9d52dd"></div>
<div class="t fl" style="left:1008.68px;top:567.90px;font-size:15px;line-height:15px;color:#fff;transform:scaleX(0.8850)">che<span style="letter-spacing:-1.73px">...</span></div>
<div class="a" style="left:1002px;top:587px;width:42px;height:23px;background:#9d52dd"></div>
<div class="t fl" style="left:1008.18px;top:590.90px;font-size:15px;line-height:15px;color:#fff;transform:scaleX(0.8850)">che<span style="letter-spacing:-1.73px">...</span></div>
<div class="a" style="left:1002px;top:610px;width:42px;height:23px;background:#9d52dd"></div>
<div class="t fl" style="left:1008.18px;top:613.90px;font-size:15px;line-height:15px;color:#fff;transform:scaleX(0.8850)">che<span style="letter-spacing:-1.73px">...</span></div>
<div class="a" style="left:1002px;top:633px;width:41px;height:23px;background:#9d52dd"></div>
<div class="t fl" style="left:1007.68px;top:636.90px;font-size:15px;line-height:15px;color:#fff;transform:scaleX(0.8850)">che<span style="letter-spacing:-1.73px">...</span></div>
<div class="a" style="left:1002px;top:656px;width:40px;height:23px;background:#9d52dd"></div>
<div class="t fl" style="left:1007.18px;top:659.90px;font-size:15px;line-height:15px;color:#fff;transform:scaleX(0.8850)">che<span style="letter-spacing:-1.73px">...</span></div>
<div class="a" style="left:1002px;top:679px;width:40px;height:23px;background:#9d52dd"></div>
<div class="t fl" style="left:1007.18px;top:682.90px;font-size:15px;line-height:15px;color:#fff;transform:scaleX(0.8850)">che<span style="letter-spacing:-1.73px">...</span></div>
<div class="a" style="left:1002px;top:702px;width:39px;height:23px;background:#9d52dd"></div>
<div class="t fl" style="left:1006.68px;top:705.90px;font-size:15px;line-height:15px;color:#fff;transform:scaleX(0.8850)">che<span style="letter-spacing:-1.73px">...</span></div>
<div class="a" style="left:1002px;top:725px;width:39px;height:23px;background:#9d52dd"></div>
<div class="t fl" style="left:1006.68px;top:728.90px;font-size:15px;line-height:15px;color:#fff;transform:scaleX(0.8850)">che<span style="letter-spacing:-1.73px">...</span></div>
<div class="a" style="left:1002px;top:748px;width:38px;height:23px;background:#9d52dd"></div>
<div class="t fl" style="left:1006.18px;top:751.90px;font-size:15px;line-height:15px;color:#fff;transform:scaleX(0.8850)">che<span style="letter-spacing:-1.73px">...</span></div>
<div class="a" style="left:1002px;top:771px;width:37px;height:23px;background:#9d52dd"></div>
<div class="t fl" style="left:1009.37px;top:774.90px;font-size:15px;line-height:15px;color:#fff;transform:scaleX(0.8850)">ch<span style="letter-spacing:-1.73px">...</span></div>
<div class="a" style="left:1002px;top:794px;width:37px;height:23px;background:#9d52dd"></div>
<div class="t fl" style="left:1009.37px;top:797.90px;font-size:15px;line-height:15px;color:#fff;transform:scaleX(0.8850)">ch<span style="letter-spacing:-1.73px">...</span></div>
<div class="a" style="left:1002px;top:817px;width:36px;height:23px;background:#9d52dd"></div>
<div class="t fl" style="left:1008.87px;top:820.90px;font-size:15px;line-height:15px;color:#fff;transform:scaleX(0.8850)">ch<span style="letter-spacing:-1.73px">...</span></div>
<div class="a" style="left:1002px;top:840px;width:36px;height:23px;background:#9d52dd"></div>
<div class="t fl" style="left:1008.87px;top:843.90px;font-size:15px;line-height:15px;color:#fff;transform:scaleX(0.8850)">ch<span style="letter-spacing:-1.73px">...</span></div>
<div class="a" style="left:1002px;top:863px;width:35px;height:23px;background:#9d52dd"></div>
<div class="t fl" style="left:1008.37px;top:866.90px;font-size:15px;line-height:15px;color:#fff;transform:scaleX(0.8850)">ch<span style="letter-spacing:-1.73px">...</span></div>
<div class="a" style="left:1002px;top:886px;width:34px;height:23px;background:#9d52dd"></div>
<div class="t fl" style="left:1007.87px;top:889.90px;font-size:15px;line-height:15px;color:#fff;transform:scaleX(0.8850)">ch<span style="letter-spacing:-1.73px">...</span></div>
<div class="a" style="left:1002px;top:909px;width:34px;height:23px;background:#9d52dd"></div>
<div class="t fl" style="left:1007.87px;top:912.90px;font-size:15px;line-height:15px;color:#fff;transform:scaleX(0.8850)">ch<span style="letter-spacing:-1.73px">...</span></div>
<div class="a" style="left:1002px;top:932px;width:33px;height:23px;background:#9d52dd"></div>
<div class="t fl" style="left:1007.37px;top:935.90px;font-size:15px;line-height:15px;color:#fff;transform:scaleX(0.8850)">ch<span style="letter-spacing:-1.73px">...</span></div>
<div class="a" style="left:1002px;top:955px;width:33px;height:23px;background:#9d52dd"></div>
<div class="t fl" style="left:1007.37px;top:958.90px;font-size:15px;line-height:15px;color:#fff;transform:scaleX(0.8850)">ch<span style="letter-spacing:-1.73px">...</span></div>
<div class="a" style="left:1002px;top:978px;width:32px;height:23px;background:#9d52dd"></div>
<div class="t fl" style="left:1006.87px;top:981.90px;font-size:15px;line-height:15px;color:#fff;transform:scaleX(0.8850)">ch<span style="letter-spacing:-1.73px">...</span></div>
<div class="a" style="left:1002px;top:1001px;width:32px;height:23px;background:#9d52dd"></div>
<div class="t fl" style="left:1006.87px;top:1004.90px;font-size:15px;line-height:15px;color:#fff;transform:scaleX(0.8850)">ch<span style="letter-spacing:-1.73px">...</span></div>
<div class="a" style="left:1002px;top:1024px;width:31px;height:23px;background:#9d52dd"></div>
<div class="t fl" style="left:1006.37px;top:1027.90px;font-size:15px;line-height:15px;color:#fff;transform:scaleX(0.8850)">ch<span style="letter-spacing:-1.73px">...</span></div>
<div class="a" style="left:1049px;top:472px;width:44px;height:23px;background:#9d52dd"></div>
<div class="t fl" style="left:1056.18px;top:475.90px;font-size:15px;line-height:15px;color:#fff;transform:scaleX(0.8850)">che<span style="letter-spacing:-1.73px">...</span></div>
<div class="a" style="left:1049px;top:495px;width:43px;height:23px;background:#9d52dd"></div>
<div class="t fl" style="left:1055.68px;top:498.90px;font-size:15px;line-height:15px;color:#fff;transform:scaleX(0.8850)">che<span style="letter-spacing:-1.73px">...</span></div>
<div class="a" style="left:1049px;top:518px;width:43px;height:23px;background:#9d52dd"></div>
<div class="t fl" style="left:1055.68px;top:521.90px;font-size:15px;line-height:15px;color:#fff;transform:scaleX(0.8850)">che<span style="letter-spacing:-1.73px">...</span></div>
<div class="a" style="left:1049px;top:541px;width:42px;height:23px;background:#9d52dd"></div>
<div class="t fl" style="left:1055.18px;top:544.90px;font-size:15px;line-height:15px;color:#fff;transform:scaleX(0.8850)">che<span style="letter-spacing:-1.73px">...</span></div>
<div class="a" style="left:1049px;top:564px;width:41px;height:23px;background:#9d52dd"></div>
<div class="t fl" style="left:1054.68px;top:567.90px;font-size:15px;line-height:15px;color:#fff;transform:scaleX(0.8850)">che<span style="letter-spacing:-1.73px">...</span></div>
<div class="a" style="left:1049px;top:587px;width:41px;height:23px;background:#9d52dd"></div>
<div class="t fl" style="left:1054.68px;top:590.90px;font-size:15px;line-height:15px;color:#fff;transform:scaleX(0.8850)">che<span style="letter-spacing:-1.73px">...</span></div>
<div class="a" style="left:1049px;top:610px;width:40px;height:23px;background:#9d52dd"></div>
<div class="t fl" style="left:1054.18px;top:613.90px;font-size:15px;line-height:15px;color:#fff;transform:scaleX(0.8850)">che<span style="letter-spacing:-1.73px">...</span></div>
<div class="a" style="left:1049px;top:633px;width:40px;height:23px;background:#9d52dd"></div>
<div class="t fl" style="left:1054.18px;top:636.90px;font-size:15px;line-height:15px;color:#fff;transform:scaleX(0.8850)">che<span style="letter-spacing:-1.73px">...</span></div>
<div class="a" style="left:1049px;top:656px;width:39px;height:23px;background:#9d52dd"></div>
<div class="t fl" style="left:1053.68px;top:659.90px;font-size:15px;line-height:15px;color:#fff;transform:scaleX(0.8850)">che<span style="letter-spacing:-1.73px">...</span></div>
<div class="a" style="left:1049px;top:679px;width:38px;height:23px;background:#9d52dd"></div>
<div class="t fl" style="left:1053.18px;top:682.90px;font-size:15px;line-height:15px;color:#fff;transform:scaleX(0.8850)">che<span style="letter-spacing:-1.73px">...</span></div>
<div class="a" style="left:1049px;top:702px;width:38px;height:23px;background:#9d52dd"></div>
<div class="t fl" style="left:1053.18px;top:705.90px;font-size:15px;line-height:15px;color:#fff;transform:scaleX(0.8850)">che<span style="letter-spacing:-1.73px">...</span></div>
<div class="a" style="left:1049px;top:725px;width:37px;height:23px;background:#9d52dd"></div>
<div class="t fl" style="left:1056.37px;top:728.90px;font-size:15px;line-height:15px;color:#fff;transform:scaleX(0.8850)">ch<span style="letter-spacing:-1.73px">...</span></div>
<div class="a" style="left:1049px;top:748px;width:37px;height:23px;background:#9d52dd"></div>
<div class="t fl" style="left:1056.37px;top:751.90px;font-size:15px;line-height:15px;color:#fff;transform:scaleX(0.8850)">ch<span style="letter-spacing:-1.73px">...</span></div>
<div class="a" style="left:1049px;top:771px;width:36px;height:23px;background:#9d52dd"></div>
<div class="t fl" style="left:1055.87px;top:774.90px;font-size:15px;line-height:15px;color:#fff;transform:scaleX(0.8850)">ch<span style="letter-spacing:-1.73px">...</span></div>
<div class="a" style="left:1049px;top:794px;width:35px;height:23px;background:#9d52dd"></div>
<div class="t fl" style="left:1055.37px;top:797.90px;font-size:15px;line-height:15px;color:#fff;transform:scaleX(0.8850)">ch<span style="letter-spacing:-1.73px">...</span></div>
<div class="a" style="left:1049px;top:817px;width:35px;height:23px;background:#9d52dd"></div>
<div class="t fl" style="left:1055.37px;top:820.90px;font-size:15px;line-height:15px;color:#fff;transform:scaleX(0.8850)">ch<span style="letter-spacing:-1.73px">...</span></div>
<div class="a" style="left:1049px;top:840px;width:34px;height:23px;background:#9d52dd"></div>
<div class="t fl" style="left:1054.87px;top:843.90px;font-size:15px;line-height:15px;color:#fff;transform:scaleX(0.8850)">ch<span style="letter-spacing:-1.73px">...</span></div>
<div class="a" style="left:1049px;top:863px;width:33px;height:23px;background:#9d52dd"></div>
<div class="t fl" style="left:1054.37px;top:866.90px;font-size:15px;line-height:15px;color:#fff;transform:scaleX(0.8850)">ch<span style="letter-spacing:-1.73px">...</span></div>
<div class="a" style="left:1049px;top:886px;width:33px;height:23px;background:#9d52dd"></div>
<div class="t fl" style="left:1054.37px;top:889.90px;font-size:15px;line-height:15px;color:#fff;transform:scaleX(0.8850)">ch<span style="letter-spacing:-1.73px">...</span></div>
<div class="a" style="left:1049px;top:909px;width:32px;height:23px;background:#9d52dd"></div>
<div class="t fl" style="left:1053.87px;top:912.90px;font-size:15px;line-height:15px;color:#fff;transform:scaleX(0.8850)">ch<span style="letter-spacing:-1.73px">...</span></div>
<div class="a" style="left:1049px;top:932px;width:31px;height:23px;background:#9d52dd"></div>
<div class="t fl" style="left:1053.37px;top:935.90px;font-size:15px;line-height:15px;color:#fff;transform:scaleX(0.8850)">ch<span style="letter-spacing:-1.73px">...</span></div>
<div class="a" style="left:1049px;top:955px;width:31px;height:23px;background:#9d52dd"></div>
<div class="t fl" style="left:1053.37px;top:958.90px;font-size:15px;line-height:15px;color:#fff;transform:scaleX(0.8850)">ch<span style="letter-spacing:-1.73px">...</span></div>
<div class="a" style="left:1049px;top:978px;width:30px;height:23px;background:#9d52dd"></div>
<div class="t fl" style="left:1052.87px;top:981.90px;font-size:15px;line-height:15px;color:#fff;transform:scaleX(0.8850)">ch<span style="letter-spacing:-1.73px">...</span></div>
<div class="a" style="left:1049px;top:1001px;width:30px;height:23px;background:#9d52dd"></div>
<div class="t fl" style="left:1052.87px;top:1004.90px;font-size:15px;line-height:15px;color:#fff;transform:scaleX(0.8850)">ch<span style="letter-spacing:-1.73px">...</span></div>
<div class="a" style="left:1049px;top:1024px;width:29px;height:23px;background:#9d52dd"></div>
<div class="t fl" style="left:1056.07px;top:1027.90px;font-size:15px;line-height:15px;color:#fff;transform:scaleX(0.8850)">c<span style="letter-spacing:-1.73px">...</span></div>
<div class="a" style="left:1094px;top:472px;width:43px;height:23px;background:#9d52dd"></div>
<div class="t fl" style="left:1100.68px;top:475.90px;font-size:15px;line-height:15px;color:#fff;transform:scaleX(0.8850)">che<span style="letter-spacing:-1.73px">...</span></div>
<div class="a" style="left:1094px;top:495px;width:42px;height:23px;background:#9d52dd"></div>
<div class="t fl" style="left:1100.18px;top:498.90px;font-size:15px;line-height:15px;color:#fff;transform:scaleX(0.8850)">che<span style="letter-spacing:-1.73px">...</span></div>
<div class="a" style="left:1094px;top:518px;width:42px;height:23px;background:#9d52dd"></div>
<div class="t fl" style="left:1100.18px;top:521.90px;font-size:15px;line-height:15px;color:#fff;transform:scaleX(0.8850)">che<span style="letter-spacing:-1.73px">...</span></div>
<div class="a" style="left:1094px;top:541px;width:41px;height:23px;background:#9d52dd"></div>
<div class="t fl" style="left:1099.68px;top:544.90px;font-size:15px;line-height:15px;color:#fff;transform:scaleX(0.8850)">che<span style="letter-spacing:-1.73px">...</span></div>
<div class="a" style="left:1094px;top:564px;width:40px;height:23px;background:#9d52dd"></div>
<div class="t fl" style="left:1099.18px;top:567.90px;font-size:15px;line-height:15px;color:#fff;transform:scaleX(0.8850)">che<span style="letter-spacing:-1.73px">...</span></div>
<div class="a" style="left:1094px;top:587px;width:40px;height:23px;background:#9d52dd"></div>
<div class="t fl" style="left:1099.18px;top:590.90px;font-size:15px;line-height:15px;color:#fff;transform:scaleX(0.8850)">che<span style="letter-spacing:-1.73px">...</span></div>
<div class="a" style="left:1094px;top:610px;width:39px;height:23px;background:#9d52dd"></div>
<div class="t fl" style="left:1098.68px;top:613.90px;font-size:15px;line-height:15px;color:#fff;transform:scaleX(0.8850)">che<span style="letter-spacing:-1.73px">...</span></div>
<div class="a" style="left:1094px;top:633px;width:39px;height:23px;background:#9d52dd"></div>
<div class="t fl" style="left:1098.68px;top:636.90px;font-size:15px;line-height:15px;color:#fff;transform:scaleX(0.8850)">che<span style="letter-spacing:-1.73px">...</span></div>
<div class="a" style="left:1094px;top:656px;width:38px;height:23px;background:#9d52dd"></div>
<div class="t fl" style="left:1098.18px;top:659.90px;font-size:15px;line-height:15px;color:#fff;transform:scaleX(0.8850)">che<span style="letter-spacing:-1.73px">...</span></div>
<div class="a" style="left:1094px;top:679px;width:37px;height:23px;background:#9d52dd"></div>
<div class="t fl" style="left:1101.37px;top:682.90px;font-size:15px;line-height:15px;color:#fff;transform:scaleX(0.8850)">ch<span style="letter-spacing:-1.73px">...</span></div>
<div class="a" style="left:1094px;top:702px;width:37px;height:23px;background:#9d52dd"></div>
<div class="t fl" style="left:1101.37px;top:705.90px;font-size:15px;line-height:15px;color:#fff;transform:scaleX(0.8850)">ch<span style="letter-spacing:-1.73px">...</span></div>
<div class="a" style="left:1094px;top:725px;width:36px;height:23px;background:#9d52dd"></div>
<div class="t fl" style="left:1100.87px;top:728.90px;font-size:15px;line-height:15px;color:#fff;transform:scaleX(0.8850)">ch<span style="letter-spacing:-1.73px">...</span></div>
<div class="a" style="left:1094px;top:748px;width:36px;height:23px;background:#9d52dd"></div>
<div class="t fl" style="left:1100.87px;top:751.90px;font-size:15px;line-height:15px;color:#fff;transform:scaleX(0.8850)">ch<span style="letter-spacing:-1.73px">...</span></div>
<div class="a" style="left:1094px;top:771px;width:35px;height:23px;background:#9d52dd"></div>
<div class="t fl" style="left:1100.37px;top:774.90px;font-size:15px;line-height:15px;color:#fff;transform:scaleX(0.8850)">ch<span style="letter-spacing:-1.73px">...</span></div>
<div class="a" style="left:1094px;top:794px;width:34px;height:23px;background:#9d52dd"></div>
<div class="t fl" style="left:1099.87px;top:797.90px;font-size:15px;line-height:15px;color:#fff;transform:scaleX(0.8850)">ch<span style="letter-spacing:-1.73px">...</span></div>
<div class="a" style="left:1094px;top:817px;width:34px;height:23px;background:#9d52dd"></div>
<div class="t fl" style="left:1099.87px;top:820.90px;font-size:15px;line-height:15px;color:#fff;transform:scaleX(0.8850)">ch<span style="letter-spacing:-1.73px">...</span></div>
<div class="a" style="left:1094px;top:840px;width:33px;height:23px;background:#9d52dd"></div>
<div class="t fl" style="left:1099.37px;top:843.90px;font-size:15px;line-height:15px;color:#fff;transform:scaleX(0.8850)">ch<span style="letter-spacing:-1.73px">...</span></div>
<div class="a" style="left:1094px;top:863px;width:32px;height:23px;background:#9d52dd"></div>
<div class="t fl" style="left:1098.87px;top:866.90px;font-size:15px;line-height:15px;color:#fff;transform:scaleX(0.8850)">ch<span style="letter-spacing:-1.73px">...</span></div>
<div class="a" style="left:1094px;top:886px;width:32px;height:23px;background:#9d52dd"></div>
<div class="t fl" style="left:1098.87px;top:889.90px;font-size:15px;line-height:15px;color:#fff;transform:scaleX(0.8850)">ch<span style="letter-spacing:-1.73px">...</span></div>
<div class="a" style="left:1094px;top:909px;width:31px;height:23px;background:#9d52dd"></div>
<div class="t fl" style="left:1098.37px;top:912.90px;font-size:15px;line-height:15px;color:#fff;transform:scaleX(0.8850)">ch<span style="letter-spacing:-1.73px">...</span></div>
<div class="a" style="left:1094px;top:932px;width:30px;height:23px;background:#9d52dd"></div>
<div class="t fl" style="left:1097.87px;top:935.90px;font-size:15px;line-height:15px;color:#fff;transform:scaleX(0.8850)">ch<span style="letter-spacing:-1.73px">...</span></div>
<div class="a" style="left:1094px;top:955px;width:30px;height:23px;background:#9d52dd"></div>
<div class="t fl" style="left:1097.87px;top:958.90px;font-size:15px;line-height:15px;color:#fff;transform:scaleX(0.8850)">ch<span style="letter-spacing:-1.73px">...</span></div>
<div class="a" style="left:1094px;top:978px;width:29px;height:23px;background:#9d52dd"></div>
<div class="t fl" style="left:1101.07px;top:981.90px;font-size:15px;line-height:15px;color:#fff;transform:scaleX(0.8850)">c<span style="letter-spacing:-1.73px">...</span></div>
<div class="a" style="left:1094px;top:1001px;width:29px;height:23px;background:#9d52dd"></div>
<div class="t fl" style="left:1101.07px;top:1004.90px;font-size:15px;line-height:15px;color:#fff;transform:scaleX(0.8850)">c<span style="letter-spacing:-1.73px">...</span></div>
<div class="a" style="left:1094px;top:1024px;width:28px;height:23px;background:#9d52dd"></div>
<div class="t fl" style="left:1100.57px;top:1027.90px;font-size:15px;line-height:15px;color:#fff;transform:scaleX(0.8850)">c<span style="letter-spacing:-1.73px">...</span></div>
<div class="a" style="left:1139px;top:472px;width:42px;height:23px;background:#9d52dd"></div>
<div class="t fl" style="left:1145.18px;top:475.90px;font-size:15px;line-height:15px;color:#fff;transform:scaleX(0.8850)">che<span style="letter-spacing:-1.73px">...</span></div>
<div class="a" style="left:1139px;top:495px;width:41px;height:23px;background:#9d52dd"></div>
<div class="t fl" style="left:1144.68px;top:498.90px;font-size:15px;line-height:15px;color:#fff;transform:scaleX(0.8850)">che<span style="letter-spacing:-1.73px">...</span></div>
<div class="a" style="left:1139px;top:518px;width:41px;height:23px;background:#9d52dd"></div>
<div class="t fl" style="left:1144.68px;top:521.90px;font-size:15px;line-height:15px;color:#fff;transform:scaleX(0.8850)">che<span style="letter-spacing:-1.73px">...</span></div>
<div class="a" style="left:1139px;top:541px;width:40px;height:23px;background:#9d52dd"></div>
<div class="t fl" style="left:1144.18px;top:544.90px;font-size:15px;line-height:15px;color:#fff;transform:scaleX(0.8850)">che<span style="letter-spacing:-1.73px">...</span></div>
<div class="a" style="left:1139px;top:564px;width:39px;height:23px;background:#9d52dd"></div>
<div class="t fl" style="left:1143.68px;top:567.90px;font-size:15px;line-height:15px;color:#fff;transform:scaleX(0.8850)">che<span style="letter-spacing:-1.73px">...</span></div>
<div class="a" style="left:1139px;top:587px;width:39px;height:23px;background:#9d52dd"></div>
<div class="t fl" style="left:1143.68px;top:590.90px;font-size:15px;line-height:15px;color:#fff;transform:scaleX(0.8850)">che<span style="letter-spacing:-1.73px">...</span></div>
<div class="a" style="left:1139px;top:610px;width:38px;height:23px;background:#9d52dd"></div>
<div class="t fl" style="left:1143.18px;top:613.90px;font-size:15px;line-height:15px;color:#fff;transform:scaleX(0.8850)">che<span style="letter-spacing:-1.73px">...</span></div>
<div class="a" style="left:1139px;top:633px;width:38px;height:23px;background:#9d52dd"></div>
<div class="t fl" style="left:1143.18px;top:636.90px;font-size:15px;line-height:15px;color:#fff;transform:scaleX(0.8850)">che<span style="letter-spacing:-1.73px">...</span></div>
<div class="a" style="left:1139px;top:656px;width:37px;height:23px;background:#9d52dd"></div>
<div class="t fl" style="left:1146.37px;top:659.90px;font-size:15px;line-height:15px;color:#fff;transform:scaleX(0.8850)">ch<span style="letter-spacing:-1.73px">...</span></div>
<div class="a" style="left:1139px;top:679px;width:36px;height:23px;background:#9d52dd"></div>
<div class="t fl" style="left:1145.87px;top:682.90px;font-size:15px;line-height:15px;color:#fff;transform:scaleX(0.8850)">ch<span style="letter-spacing:-1.73px">...</span></div>
<div class="a" style="left:1139px;top:702px;width:36px;height:23px;background:#9d52dd"></div>
<div class="t fl" style="left:1145.87px;top:705.90px;font-size:15px;line-height:15px;color:#fff;transform:scaleX(0.8850)">ch<span style="letter-spacing:-1.73px">...</span></div>
<div class="a" style="left:1139px;top:725px;width:35px;height:23px;background:#9d52dd"></div>
<div class="t fl" style="left:1145.37px;top:728.90px;font-size:15px;line-height:15px;color:#fff;transform:scaleX(0.8850)">ch<span style="letter-spacing:-1.73px">...</span></div>
<div class="a" style="left:1139px;top:748px;width:35px;height:23px;background:#9d52dd"></div>
<div class="t fl" style="left:1145.37px;top:751.90px;font-size:15px;line-height:15px;color:#fff;transform:scaleX(0.8850)">ch<span style="letter-spacing:-1.73px">...</span></div>
<div class="a" style="left:1139px;top:771px;width:34px;height:23px;background:#9d52dd"></div>
<div class="t fl" style="left:1144.87px;top:774.90px;font-size:15px;line-height:15px;color:#fff;transform:scaleX(0.8850)">ch<span style="letter-spacing:-1.73px">...</span></div>
<div class="a" style="left:1139px;top:794px;width:33px;height:23px;background:#9d52dd"></div>
<div class="t fl" style="left:1144.37px;top:797.90px;font-size:15px;line-height:15px;color:#fff;transform:scaleX(0.8850)">ch<span style="letter-spacing:-1.73px">...</span></div>
<div class="a" style="left:1139px;top:817px;width:33px;height:23px;background:#9d52dd"></div>
<div class="t fl" style="left:1144.37px;top:820.90px;font-size:15px;line-height:15px;color:#fff;transform:scaleX(0.8850)">ch<span style="letter-spacing:-1.73px">...</span></div>
<div class="a" style="left:1139px;top:840px;width:32px;height:23px;background:#9d52dd"></div>
<div class="t fl" style="left:1143.87px;top:843.90px;font-size:15px;line-height:15px;color:#fff;transform:scaleX(0.8850)">ch<span style="letter-spacing:-1.73px">...</span></div>
<div class="a" style="left:1139px;top:863px;width:31px;height:23px;background:#9d52dd"></div>
<div class="t fl" style="left:1143.37px;top:866.90px;font-size:15px;line-height:15px;color:#fff;transform:scaleX(0.8850)">ch<span style="letter-spacing:-1.73px">...</span></div>
<div class="a" style="left:1139px;top:886px;width:31px;height:23px;background:#9d52dd"></div>
<div class="t fl" style="left:1143.37px;top:889.90px;font-size:15px;line-height:15px;color:#fff;transform:scaleX(0.8850)">ch<span style="letter-spacing:-1.73px">...</span></div>
<div class="a" style="left:1139px;top:909px;width:30px;height:23px;background:#9d52dd"></div>
<div class="t fl" style="left:1142.87px;top:912.90px;font-size:15px;line-height:15px;color:#fff;transform:scaleX(0.8850)">ch<span style="letter-spacing:-1.73px">...</span></div>
<div class="a" style="left:1139px;top:932px;width:29px;height:23px;background:#9d52dd"></div>
<div class="t fl" style="left:1146.07px;top:935.90px;font-size:15px;line-height:15px;color:#fff;transform:scaleX(0.8850)">c<span style="letter-spacing:-1.73px">...</span></div>
<div class="a" style="left:1139px;top:955px;width:29px;height:23px;background:#9d52dd"></div>
<div class="t fl" style="left:1146.07px;top:958.90px;font-size:15px;line-height:15px;color:#fff;transform:scaleX(0.8850)">c<span style="letter-spacing:-1.73px">...</span></div>
<div class="a" style="left:1139px;top:978px;width:28px;height:23px;background:#9d52dd"></div>
<div class="t fl" style="left:1145.57px;top:981.90px;font-size:15px;line-height:15px;color:#fff;transform:scaleX(0.8850)">c<span style="letter-spacing:-1.73px">...</span></div>
<div class="a" style="left:1139px;top:1001px;width:28px;height:23px;background:#9d52dd"></div>
<div class="t fl" style="left:1145.57px;top:1004.90px;font-size:15px;line-height:15px;color:#fff;transform:scaleX(0.8850)">c<span style="letter-spacing:-1.73px">...</span></div>
<div class="a" style="left:1139px;top:1024px;width:27px;height:23px;background:#9d52dd"></div>
<div class="t fl" style="left:1145.07px;top:1027.90px;font-size:15px;line-height:15px;color:#fff;transform:scaleX(0.8850)">c<span style="letter-spacing:-1.73px">...</span></div>
<div class="a" style="left:1183px;top:472px;width:41px;height:23px;background:#9d52dd"></div>
<div class="t fl" style="left:1188.68px;top:475.90px;font-size:15px;line-height:15px;color:#fff;transform:scaleX(0.8850)">che<span style="letter-spacing:-1.73px">...</span></div>
<div class="a" style="left:1183px;top:495px;width:40px;height:23px;background:#9d52dd"></div>
<div class="t fl" style="left:1188.18px;top:498.90px;font-size:15px;line-height:15px;color:#fff;transform:scaleX(0.8850)">che<span style="letter-spacing:-1.73px">...</span></div>
<div class="a" style="left:1183px;top:518px;width:40px;height:23px;background:#9d52dd"></div>
<div class="t fl" style="left:1188.18px;top:521.90px;font-size:15px;line-height:15px;color:#fff;transform:scaleX(0.8850)">che<span style="letter-spacing:-1.73px">...</span></div>
<div class="a" style="left:1183px;top:541px;width:39px;height:23px;background:#9d52dd"></div>
<div class="t fl" style="left:1187.68px;top:544.90px;font-size:15px;line-height:15px;color:#fff;transform:scaleX(0.8850)">che<span style="letter-spacing:-1.73px">...</span></div>
<div class="a" style="left:1183px;top:564px;width:39px;height:23px;background:#9d52dd"></div>
<div class="t fl" style="left:1187.68px;top:567.90px;font-size:15px;line-height:15px;color:#fff;transform:scaleX(0.8850)">che<span style="letter-spacing:-1.73px">...</span></div>
<div class="a" style="left:1183px;top:587px;width:38px;height:23px;background:#9d52dd"></div>
<div class="t fl" style="left:1187.18px;top:590.90px;font-size:15px;line-height:15px;color:#fff;transform:scaleX(0.8850)">che<span style="letter-spacing:-1.73px">...</span></div>
<div class="a" style="left:1183px;top:610px;width:37px;height:23px;background:#9d52dd"></div>
<div class="t fl" style="left:1190.37px;top:613.90px;font-size:15px;line-height:15px;color:#fff;transform:scaleX(0.8850)">ch<span style="letter-spacing:-1.73px">...</span></div>
<div class="a" style="left:1183px;top:633px;width:37px;height:23px;background:#9d52dd"></div>
<div class="t fl" style="left:1190.37px;top:636.90px;font-size:15px;line-height:15px;color:#fff;transform:scaleX(0.8850)">ch<span style="letter-spacing:-1.73px">...</span></div>
<div class="a" style="left:1183px;top:656px;width:36px;height:23px;background:#9d52dd"></div>
<div class="t fl" style="left:1189.87px;top:659.90px;font-size:15px;line-height:15px;color:#fff;transform:scaleX(0.8850)">ch<span style="letter-spacing:-1.73px">...</span></div>
<div class="a" style="left:1183px;top:679px;width:36px;height:23px;background:#9d52dd"></div>
<div class="t fl" style="left:1189.87px;top:682.90px;font-size:15px;line-height:15px;color:#fff;transform:scaleX(0.8850)">ch<span style="letter-spacing:-1.73px">...</span></div>
<div class="a" style="left:1183px;top:702px;width:35px;height:23px;background:#9d52dd"></div>
<div class="t fl" style="left:1189.37px;top:705.90px;font-size:15px;line-height:15px;color:#fff;transform:scaleX(0.8850)">ch<span style="letter-spacing:-1.73px">...</span></div>
<div class="a" style="left:1183px;top:725px;width:35px;height:23px;background:#9d52dd"></div>
<div class="t fl" style="left:1189.37px;top:728.90px;font-size:15px;line-height:15px;color:#fff;transform:scaleX(0.8850)">ch<span style="letter-spacing:-1.73px">...</span></div>
<div class="a" style="left:1183px;top:748px;width:34px;height:23px;background:#9d52dd"></div>
<div class="t fl" style="left:1188.87px;top:751.90px;font-size:15px;line-height:15px;color:#fff;transform:scaleX(0.8850)">ch<span style="letter-spacing:-1.73px">...</span></div>
<div class="a" style="left:1183px;top:771px;width:33px;height:23px;background:#9d52dd"></div>
<div class="t fl" style="left:1188.37px;top:774.90px;font-size:15px;line-height:15px;color:#fff;transform:scaleX(0.8850)">ch<span style="letter-spacing:-1.73px">...</span></div>
<div class="a" style="left:1183px;top:794px;width:33px;height:23px;background:#9d52dd"></div>
<div class="t fl" style="left:1188.37px;top:797.90px;font-size:15px;line-height:15px;color:#fff;transform:scaleX(0.8850)">ch<span style="letter-spacing:-1.73px">...</span></div>
<div class="a" style="left:1183px;top:817px;width:32px;height:23px;background:#9d52dd"></div>
<div class="t fl" style="left:1187.87px;top:820.90px;font-size:15px;line-height:15px;color:#fff;transform:scaleX(0.8850)">ch<span style="letter-spacing:-1.73px">...</span></div>
<div class="a" style="left:1183px;top:840px;width:32px;height:23px;background:#9d52dd"></div>
<div class="t fl" style="left:1187.87px;top:843.90px;font-size:15px;line-height:15px;color:#fff;transform:scaleX(0.8850)">ch<span style="letter-spacing:-1.73px">...</span></div>
<div class="a" style="left:1183px;top:863px;width:31px;height:23px;background:#9d52dd"></div>
<div class="t fl" style="left:1187.37px;top:866.90px;font-size:15px;line-height:15px;color:#fff;transform:scaleX(0.8850)">ch<span style="letter-spacing:-1.73px">...</span></div>
<div class="a" style="left:1183px;top:886px;width:31px;height:23px;background:#9d52dd"></div>
<div class="t fl" style="left:1187.37px;top:889.90px;font-size:15px;line-height:15px;color:#fff;transform:scaleX(0.8850)">ch<span style="letter-spacing:-1.73px">...</span></div>
<div class="a" style="left:1183px;top:909px;width:30px;height:23px;background:#9d52dd"></div>
<div class="t fl" style="left:1186.87px;top:912.90px;font-size:15px;line-height:15px;color:#fff;transform:scaleX(0.8850)">ch<span style="letter-spacing:-1.73px">...</span></div>
<div class="a" style="left:1183px;top:932px;width:29px;height:23px;background:#9d52dd"></div>
<div class="t fl" style="left:1190.07px;top:935.90px;font-size:15px;line-height:15px;color:#fff;transform:scaleX(0.8850)">c<span style="letter-spacing:-1.73px">...</span></div>
<div class="a" style="left:1183px;top:955px;width:29px;height:23px;background:#9d52dd"></div>
<div class="t fl" style="left:1190.07px;top:958.90px;font-size:15px;line-height:15px;color:#fff;transform:scaleX(0.8850)">c<span style="letter-spacing:-1.73px">...</span></div>
<div class="a" style="left:1183px;top:978px;width:28px;height:23px;background:#9d52dd"></div>
<div class="t fl" style="left:1189.57px;top:981.90px;font-size:15px;line-height:15px;color:#fff;transform:scaleX(0.8850)">c<span style="letter-spacing:-1.73px">...</span></div>
<div class="a" style="left:1183px;top:1001px;width:28px;height:23px;background:#9d52dd"></div>
<div class="t fl" style="left:1189.57px;top:1004.90px;font-size:15px;line-height:15px;color:#fff;transform:scaleX(0.8850)">c<span style="letter-spacing:-1.73px">...</span></div>
<div class="a" style="left:1183px;top:1024px;width:27px;height:23px;background:#9d52dd"></div>
<div class="t fl" style="left:1189.07px;top:1027.90px;font-size:15px;line-height:15px;color:#fff;transform:scaleX(0.8850)">c<span style="letter-spacing:-1.73px">...</span></div>
<div class="a" style="left:634px;top:472px;width:72px;height:23px;background:#9d52dd"></div>
<div class="t fl" style="left:640.80px;top:475.90px;font-size:15px;line-height:15px;color:#fff;transform:scaleX(0.8850)">checkEx<span style="letter-spacing:-1.73px">...</span></div>
<div class="a" style="left:640px;top:495px;width:66px;height:23px;background:#5aa8cc"></div>
<div class="t fl" style="left:652.65px;top:498.90px;font-size:15px;line-height:15px;color:#fff;transform:scaleX(0.8850)">struct<span style="letter-spacing:-1.73px">...</span></div>
<div class="a" style="left:640px;top:518px;width:65px;height:23px;background:#a69f6e"></div>
<div class="t fl" style="left:649.32px;top:521.90px;font-size:15px;line-height:15px;color:#fff;transform:scaleX(0.8850)">getVar<span style="letter-spacing:-1.73px">...</span></div>
<div class="a" style="left:640px;top:541px;width:65px;height:23px;background:#5aa8cc"></div>
<div class="t fl" style="left:652.15px;top:544.90px;font-size:15px;line-height:15px;color:#fff;transform:scaleX(0.8850)">struct<span style="letter-spacing:-1.73px">...</span></div>
<div class="a" style="left:647px;top:564px;width:57px;height:23px;background:#5aa8cc"></div>
<div class="t fl" style="left:657.00px;top:567.90px;font-size:15px;line-height:15px;color:#fff;transform:scaleX(0.8850)">struc<span style="letter-spacing:-1.73px">...</span></div>
<div class="a" style="left:647px;top:587px;width:57px;height:23px;background:#5aa8cc"></div>
<div class="t fl" style="left:657.00px;top:590.90px;font-size:15px;line-height:15px;color:#fff;transform:scaleX(0.8850)">struc<span style="letter-spacing:-1.73px">...</span></div>
<div class="a" style="left:647px;top:610px;width:56px;height:23px;background:#a69f6e"></div>
<div class="t fl" style="left:654.03px;top:613.90px;font-size:15px;line-height:15px;color:#fff;transform:scaleX(0.8850)">getVa<span style="letter-spacing:-1.73px">...</span></div>
<div class="a" style="left:647px;top:633px;width:56px;height:23px;background:#5aa8cc"></div>
<div class="t fl" style="left:656.50px;top:636.90px;font-size:15px;line-height:15px;color:#fff;transform:scaleX(0.8850)">struc<span style="letter-spacing:-1.73px">...</span></div>
<div class="a" style="left:650px;top:656px;width:52px;height:23px;background:#5aa8cc"></div>
<div class="t fl" style="left:657.50px;top:659.90px;font-size:15px;line-height:15px;color:#fff;transform:scaleX(0.8850)">struc<span style="letter-spacing:-1.73px">...</span></div>
<div class="a" style="left:650px;top:679px;width:51px;height:23px;background:#5aa8cc"></div>
<div class="t fl" style="left:660.32px;top:682.90px;font-size:15px;line-height:15px;color:#fff;transform:scaleX(0.8850)">stru<span style="letter-spacing:-1.73px">...</span></div>
<div class="a" style="left:650px;top:702px;width:51px;height:23px;background:#a69f6e"></div>
<div class="t fl" style="left:657.73px;top:705.90px;font-size:15px;line-height:15px;color:#fff;transform:scaleX(0.8850)">getV<span style="letter-spacing:-1.73px">...</span></div>
<div class="a" style="left:650px;top:725px;width:50px;height:23px;background:#5aa8cc"></div>
<div class="t fl" style="left:659.82px;top:728.90px;font-size:15px;line-height:15px;color:#fff;transform:scaleX(0.8850)">stru<span style="letter-spacing:-1.73px">...</span></div>
<div class="a" style="left:660px;top:748px;width:40px;height:23px;background:#5aa8cc"></div>
<div class="t fl" style="left:668.51px;top:751.90px;font-size:15px;line-height:15px;color:#fff;transform:scaleX(0.8850)">str<span style="letter-spacing:-1.73px">...</span></div>
<div class="a" style="left:660px;top:771px;width:39px;height:23px;background:#5aa8cc"></div>
<div class="t fl" style="left:668.01px;top:774.90px;font-size:15px;line-height:15px;color:#fff;transform:scaleX(0.8850)">str<span style="letter-spacing:-1.73px">...</span></div>
<div class="a" style="left:660px;top:794px;width:39px;height:23px;background:#a69f6e"></div>
<div class="t fl" style="left:666.15px;top:797.90px;font-size:15px;line-height:15px;color:#fff;transform:scaleX(0.8850)">get<span style="letter-spacing:-1.73px">...</span></div>
<div class="a" style="left:660px;top:817px;width:38px;height:23px;background:#5aa8cc"></div>
<div class="t fl" style="left:667.51px;top:820.90px;font-size:15px;line-height:15px;color:#fff;transform:scaleX(0.8850)">str<span style="letter-spacing:-1.73px">...</span></div>
<div class="a" style="left:660px;top:840px;width:38px;height:23px;background:#5aa8cc"></div>
<div class="t fl" style="left:667.51px;top:843.90px;font-size:15px;line-height:15px;color:#fff;transform:scaleX(0.8850)">str<span style="letter-spacing:-1.73px">...</span></div>
<div class="a" style="left:660px;top:863px;width:37px;height:23px;background:#5aa8cc"></div>
<div class="t fl" style="left:669.22px;top:866.90px;font-size:15px;line-height:15px;color:#fff;transform:scaleX(0.8850)">st<span style="letter-spacing:-1.73px">...</span></div>
<div class="a" style="left:660px;top:886px;width:36px;height:23px;background:#a69f6e"></div>
<div class="t fl" style="left:666.50px;top:889.90px;font-size:15px;line-height:15px;color:#fff;transform:scaleX(0.8850)">ge<span style="letter-spacing:-1.73px">...</span></div>
<div class="a" style="left:660px;top:909px;width:36px;height:23px;background:#5aa8cc"></div>
<div class="t fl" style="left:668.72px;top:912.90px;font-size:15px;line-height:15px;color:#fff;transform:scaleX(0.8850)">st<span style="letter-spacing:-1.73px">...</span></div>
<div class="a" style="left:666px;top:932px;width:29px;height:23px;background:#5aa8cc"></div>
<div class="t fl" style="left:673.07px;top:935.90px;font-size:15px;line-height:15px;color:#fff;transform:scaleX(0.8850)">s<span style="letter-spacing:-1.73px">...</span></div>
<div class="a" style="left:666px;top:955px;width:29px;height:23px;background:#5aa8cc"></div>
<div class="t fl" style="left:673.07px;top:958.90px;font-size:15px;line-height:15px;color:#fff;transform:scaleX(0.8850)">s<span style="letter-spacing:-1.73px">...</span></div>
<div class="a" style="left:666px;top:978px;width:28px;height:23px;background:#a69f6e"></div>
<div class="t fl" style="left:672.19px;top:981.90px;font-size:15px;line-height:15px;color:#fff;transform:scaleX(0.8850)">g<span style="letter-spacing:-1.73px">...</span></div>
<div class="a" style="left:666px;top:1001px;width:28px;height:23px;background:#5aa8cc"></div>
<div class="t fl" style="left:672.57px;top:1004.90px;font-size:15px;line-height:15px;color:#fff;transform:scaleX(0.8850)">s<span style="letter-spacing:-1.73px">...</span></div>
<div class="a" style="left:666px;top:1024px;width:27px;height:23px;background:#5aa8cc"></div>
<div class="t fl" style="left:672.07px;top:1027.90px;font-size:15px;line-height:15px;color:#fff;transform:scaleX(0.8850)">s<span style="letter-spacing:-1.73px">...</span></div>
<div class="a" style="left:650px;top:748px;width:7px;height:23px;background:#5aa8cc"></div>
<div class="a" style="left:650px;top:771px;width:7px;height:23px;background:#5aa8cc"></div>
<div class="a" style="left:650px;top:794px;width:7px;height:23px;background:#a69f6e"></div>
<div class="a" style="left:650px;top:817px;width:7px;height:23px;background:#5aa8cc"></div>
<div class="a" style="left:650px;top:840px;width:7px;height:23px;background:#5aa8cc"></div>
<div class="a" style="left:650px;top:863px;width:7px;height:23px;background:#5aa8cc"></div>
<div class="a" style="left:650px;top:886px;width:7px;height:23px;background:#a69f6e"></div>
<div class="a" style="left:650px;top:909px;width:7px;height:23px;background:#5aa8cc"></div>
<div class="a" style="left:640px;top:564px;width:5px;height:23px;background:#5aa8cc"></div>
<div class="a" style="left:640px;top:587px;width:5px;height:23px;background:#5aa8cc"></div>
<div class="a" style="left:640px;top:610px;width:5px;height:23px;background:#5aa8cc"></div>
<div class="a" style="left:640px;top:633px;width:5px;height:23px;background:#5aa8cc"></div>
<div class="a" style="left:640px;top:656px;width:5px;height:23px;background:#5aa8cc"></div>
<div class="a" style="left:640px;top:679px;width:5px;height:23px;background:#5aa8cc"></div>
<div class="a" style="left:1226px;top:472px;width:135px;height:23px;background:#9d52dd"></div>
<div class="t fl" style="left:1243.32px;top:475.90px;font-size:15px;line-height:15px;color:#fff;transform:scaleX(0.8850)">checkExpression</div>
<div class="a" style="left:1226px;top:495px;width:134px;height:23px;background:#9d52dd"></div>
<div class="t fl" style="left:1242.82px;top:498.90px;font-size:15px;line-height:15px;color:#fff;transform:scaleX(0.8850)">checkExpression</div>
<div class="a" style="left:1226px;top:518px;width:121px;height:23px;background:#9d52dd"></div>
<div class="t fl" style="left:1236.32px;top:521.90px;font-size:15px;line-height:15px;color:#fff;transform:scaleX(0.8850)">checkExpression</div>
<div class="a" style="left:1226px;top:541px;width:121px;height:23px;background:#9d52dd"></div>
<div class="t fl" style="left:1236.32px;top:544.90px;font-size:15px;line-height:15px;color:#fff;transform:scaleX(0.8850)">checkExpression</div>
<div class="a" style="left:1226px;top:564px;width:107px;height:23px;background:#9d52dd"></div>
<div class="t fl" style="left:1234.07px;top:567.90px;font-size:15px;line-height:15px;color:#fff;transform:scaleX(0.8850)">checkExpress<span style="letter-spacing:-1.73px">...</span></div>
<div class="a" style="left:1226px;top:587px;width:107px;height:23px;background:#9d52dd"></div>
<div class="t fl" style="left:1234.07px;top:590.90px;font-size:15px;line-height:15px;color:#fff;transform:scaleX(0.8850)">checkExpress<span style="letter-spacing:-1.73px">...</span></div>
<div class="a" style="left:1226px;top:610px;width:95px;height:23px;background:#9d52dd"></div>
<div class="t fl" style="left:1234.70px;top:613.90px;font-size:15px;line-height:15px;color:#fff;transform:scaleX(0.8850)">checkExpre<span style="letter-spacing:-1.73px">...</span></div>
<div class="a" style="left:1226px;top:633px;width:95px;height:23px;background:#9d52dd"></div>
<div class="t fl" style="left:1234.70px;top:636.90px;font-size:15px;line-height:15px;color:#fff;transform:scaleX(0.8850)">checkExpre<span style="letter-spacing:-1.73px">...</span></div>
<div class="a" style="left:1226px;top:656px;width:84px;height:23px;background:#9d52dd"></div>
<div class="t fl" style="left:1232.90px;top:659.90px;font-size:15px;line-height:15px;color:#fff;transform:scaleX(0.8850)">checkExpr<span style="letter-spacing:-1.73px">...</span></div>
<div class="a" style="left:1226px;top:679px;width:84px;height:23px;background:#9d52dd"></div>
<div class="t fl" style="left:1232.90px;top:682.90px;font-size:15px;line-height:15px;color:#fff;transform:scaleX(0.8850)">checkExpr<span style="letter-spacing:-1.73px">...</span></div>
<div class="a" style="left:1226px;top:702px;width:74px;height:23px;background:#9d52dd"></div>
<div class="t fl" style="left:1230.11px;top:705.90px;font-size:15px;line-height:15px;color:#fff;transform:scaleX(0.8850)">checkExp<span style="letter-spacing:-1.73px">...</span></div>
<div class="a" style="left:1226px;top:725px;width:74px;height:23px;background:#9d52dd"></div>
<div class="t fl" style="left:1230.11px;top:728.90px;font-size:15px;line-height:15px;color:#fff;transform:scaleX(0.8850)">checkExp<span style="letter-spacing:-1.73px">...</span></div>
<div class="a" style="left:1226px;top:748px;width:66px;height:23px;background:#9d52dd"></div>
<div class="t fl" style="left:1233.12px;top:751.90px;font-size:15px;line-height:15px;color:#fff;transform:scaleX(0.8850)">checkE<span style="letter-spacing:-1.73px">...</span></div>
<div class="a" style="left:1226px;top:771px;width:65px;height:23px;background:#9d52dd"></div>
<div class="t fl" style="left:1232.62px;top:774.90px;font-size:15px;line-height:15px;color:#fff;transform:scaleX(0.8850)">checkE<span style="letter-spacing:-1.73px">...</span></div>
<div class="a" style="left:1226px;top:794px;width:58px;height:23px;background:#9d52dd"></div>
<div class="t fl" style="left:1233.54px;top:797.90px;font-size:15px;line-height:15px;color:#fff;transform:scaleX(0.8850)">check<span style="letter-spacing:-1.73px">...</span></div>
<div class="a" style="left:1226px;top:817px;width:58px;height:23px;background:#9d52dd"></div>
<div class="t fl" style="left:1233.54px;top:820.90px;font-size:15px;line-height:15px;color:#fff;transform:scaleX(0.8850)">check<span style="letter-spacing:-1.73px">...</span></div>
<div class="a" style="left:1226px;top:840px;width:51px;height:23px;background:#9d52dd"></div>
<div class="t fl" style="left:1233.36px;top:843.90px;font-size:15px;line-height:15px;color:#fff;transform:scaleX(0.8850)">chec<span style="letter-spacing:-1.73px">...</span></div>
<div class="a" style="left:1226px;top:863px;width:51px;height:23px;background:#9d52dd"></div>
<div class="t fl" style="left:1233.36px;top:866.90px;font-size:15px;line-height:15px;color:#fff;transform:scaleX(0.8850)">chec<span style="letter-spacing:-1.73px">...</span></div>
<div class="a" style="left:1362px;top:472px;width:13px;height:23px;background:#9d52dd"></div>
<div class="t fl" style="left:1365.18px;top:475.90px;font-size:15px;line-height:15px;color:#fff;transform:scaleX(0.8850)">c</div>
<div class="a" style="left:1333px;top:564px;width:4px;height:23px;background:#5aa8cc"></div>
<div class="a" style="left:1310px;top:656px;width:3px;height:23px;background:#5aa8cc"></div>
<div class="a" style="left:1300px;top:702px;width:3px;height:23px;background:#5aa8cc"></div>
<div class="a" style="left:1292px;top:748px;width:2px;height:23px;background:#5aa8cc"></div>
<div class="a" style="left:1226px;top:886px;width:42px;height:23px;background:#a69f6e"></div>
<div class="t fl" style="left:1233.65px;top:889.90px;font-size:15px;line-height:15px;color:#fff;transform:scaleX(0.8850)">get<span style="letter-spacing:-1.73px">...</span></div>
<div class="a" style="left:1268px;top:886px;width:7px;height:23px;background:#5aa8cc"></div>
<div class="a" style="left:1226px;top:909px;width:41px;height:23px;background:#5aa8cc"></div>
<div class="t fl" style="left:1239.07px;top:912.90px;font-size:15px;line-height:15px;color:#fff;transform:scaleX(0.8850)">s<span style="letter-spacing:-1.73px">...</span></div>
<div class="a" style="left:1226px;top:932px;width:40px;height:23px;background:#5aa8cc"></div>
<div class="t fl" style="left:1242.68px;top:935.90px;font-size:15px;line-height:15px;color:#fff;transform:scaleX(0.8850)">s</div>
<div class="a" style="left:1226px;top:955px;width:40px;height:23px;background:#a69f6e"></div>
<div class="t fl" style="left:1242.31px;top:958.90px;font-size:15px;line-height:15px;color:#fff;transform:scaleX(0.8850)">g</div>
<div class="a" style="left:1226px;top:978px;width:6px;height:23px;background:#5aa8cc"></div>
<div class="a" style="left:1245px;top:978px;width:4px;height:23px;background:#5aa8cc"></div>
<div class="a" style="left:1255px;top:978px;width:7px;height:23px;background:#5aa8cc"></div>
<div class="a" style="left:1378px;top:495px;width:22px;height:46px;background:#5aa8cc"></div>
<div class="t fl" style="left:1381.57px;top:498.90px;font-size:15px;line-height:15px;color:#fff;transform:scaleX(0.8850)">s<span style="letter-spacing:-1.73px">...</span></div>
<div class="a" style="left:1404px;top:495px;width:85px;height:46px;background:#5aa8cc"></div>
<div class="t fl" style="left:1416.55px;top:498.90px;font-size:15px;line-height:15px;color:#fff;transform:scaleX(0.8850)">structure<span style="letter-spacing:-1.73px">...</span></div>
<div class="a" style="left:1407px;top:541px;width:1.2px;height:67px;background:#6aaed6;"></div>
<div class="a" style="left:1415px;top:541px;width:1.2px;height:21px;background:#6aaed6;"></div>
<div class="a" style="left:1455px;top:541px;width:1.2px;height:21px;background:#6aaed6;"></div>
<div class="a" style="left:1463px;top:541px;width:1.2px;height:21px;background:#6aaed6;"></div>
<div class="a" style="left:1487px;top:541px;width:1.2px;height:21px;background:#6aaed6;"></div>
<div class="a" style="left:1422px;top:518px;width:1px;height:23px;background:rgba(70,140,190,.5);"></div>
<div class="a" style="left:1438px;top:518px;width:1px;height:23px;background:rgba(70,140,190,.5);"></div>
<div class="a" style="left:1444px;top:518px;width:1px;height:23px;background:rgba(70,140,190,.5);"></div>
<div class="a" style="left:1458px;top:518px;width:1px;height:23px;background:rgba(70,140,190,.5);"></div>
<div class="a" style="left:1631px;top:495px;width:4px;height:23px;background:#5aa8cc"></div>
<div class="a" style="left:1638px;top:495px;width:4px;height:23px;background:#5aa8cc"></div>
<div class="a" style="left:1645px;top:495px;width:4px;height:23px;background:#5aa8cc"></div>
<div class="a" style="left:1646px;top:517px;width:1px;height:23px;background:#6aaed6;"></div>
<div class="a" style="left:1410px;top:426px;width:218px;height:18px;background:#d9def3"></div>
<div class="t" style="left:1416.00px;top:429.00px;font-size:13px;line-height:13px;color:#3b72c4;transform:scaleX(0.8549);">checkSourceFile - [1s 27ms 999us 584ns]</div>
<div class="a" style="left:2200px;top:426px;width:68px;height:23px;background:#d6387c"></div>
<div class="t fl" style="left:2221.46px;top:429.90px;font-size:15px;line-height:15px;color:#fff;transform:scaleX(0.8850)">emit</div>
<div class="a" style="left:2202px;top:449px;width:65px;height:23px;background:#a3802c"></div>
<div class="t fl" style="left:2209.36px;top:452.90px;font-size:15px;line-height:15px;color:#fff;transform:scaleX(0.8850)">emitDe<span style="letter-spacing:-1.73px">...</span></div>
<div class="a" style="left:2267px;top:449px;width:1px;height:23px;background:#f2d36a;"></div>
<div class="a" style="left:2202px;top:472px;width:52px;height:23px;background:#d6305f"></div>
<div class="t fl" style="left:2209.12px;top:475.90px;font-size:15px;line-height:15px;color:#fff;transform:scaleX(0.8850)">trans<span style="letter-spacing:-1.73px">...</span></div>
<div class="a" style="left:0px;top:1045px;width:2268px;height:35px;background:#f0f0f0;"></div>
<div class="a" style="left:0px;top:1079px;width:2268px;height:1px;background:#d6d6d6;"></div>
<div class="a" style="left:15.5px;top:1052px;width:3.5px;height:3.5px;border-radius:50%;background:#222"></div>
<div class="a" style="left:15.5px;top:1058.5px;width:3.5px;height:3.5px;border-radius:50%;background:#222"></div>
<div class="a" style="left:15.5px;top:1065px;width:3.5px;height:3.5px;border-radius:50%;background:#222"></div>
<div class="a" style="left:35px;top:1050px;width:135px;height:30px;background:#fff;border:1px solid #dcdcdc;border-bottom:none;border-radius:3px 3px 0 0"></div>
<div class="t" style="left:46.00px;top:1057.46px;font-size:16px;line-height:16px;color:#222;transform:scaleX(0.9053);">Current Selection</div>
<svg style="left:2208px;top:1050px" width="22" height="22"><line x1="3" y1="2.5" x2="19" y2="2.5" stroke="#222" stroke-width="1.8"/><line x1="11" y1="5" x2="11" y2="20" stroke="#222" stroke-width="1.8"/><path d="M5.5 10.5 L11 5 L16.5 10.5" stroke="#222" stroke-width="1.8" fill="none"/></svg>
<svg style="left:2240px;top:1052px" width="18" height="14"><path d="M3 4 L9 10 L15 4" stroke="#222" stroke-width="1.8" fill="none"/></svg>
<div class="a" style="left:0px;top:1080px;width:2268px;height:393px;background:#fff;"></div>
<div class="t" style="left:10.00px;top:1093.38px;font-size:22px;line-height:22px;color:#111;transform:scaleX(0.9086);">Area Selection</div>
<div class="a" style="left:148px;top:1093px;width:63px;height:27px;background:#d2d2d2;"></div>
<div class="t" style="left:158.00px;top:1097.61px;font-size:17px;line-height:17px;color:#222;transform:scaleX(0.9480);">Slices</div>
<div class="t" style="left:224.00px;top:1097.61px;font-size:17px;line-height:17px;color:#222;transform:scaleX(0.9295);">Pivot Table</div>
<div class="t" style="left:325.00px;top:1097.61px;font-size:17px;line-height:17px;color:#222;transform:scaleX(0.9072);">Slice Flamegraph</div>
<div class="a" style="left:0px;top:1126px;width:2268px;height:1.5px;background:#d8d8d8;"></div>
<div class="t" style="left:2044.00px;top:1137.00px;font-size:13px;line-height:13px;color:#333;transform:scaleX(0.9081);">Selected range: </div>
<div class="t" style="left:2133.00px;top:1137.00px;font-size:13px;line-height:13px;color:#1b3f7a;transform:scaleX(0.9519);text-decoration:underline;">1s 968ms 565us 880ns</div>
<div class="t" style="left:17.00px;top:1155.76px;font-size:18px;line-height:18px;color:#1e2433;transform:scaleX(0.8536);">Name</div>
<div class="t" style="left:576.00px;top:1155.76px;font-size:18px;line-height:18px;color:#1e2433;transform:scaleX(0.8872);">Wall duration (ms)</div>
<div class="t" style="left:1136.00px;top:1155.76px;font-size:18px;line-height:18px;color:#1e2433;transform:scaleX(0.8780);">Avg Wall duration (ms)</div>
<div class="t" style="left:1696.00px;top:1155.76px;font-size:18px;line-height:18px;color:#1e2433;transform:scaleX(0.8622);">Occurrences</div>
<div class="t" style="left:576.00px;top:1186.15px;font-size:14px;line-height:14px;color:#222;transform:scaleX(0.9722);">35484.422159</div>
<div class="t" style="left:1696.00px;top:1186.15px;font-size:14px;line-height:14px;color:#222;transform:scaleX(0.9639);">1006</div>
<div class="a" style="left:576px;top:1205.5px;width:556px;height:1.3px;background:#999;"></div>
<div class="a" style="left:1695px;top:1205.5px;width:557px;height:1.3px;background:#999;"></div>
<div class="t" style="left:17.00px;top:1221.64px;font-size:18.5px;line-height:18.5px;color:#5a5a5a;transform:scaleX(0.8350);">checkExpression</div>
<div class="t" style="left:576.00px;top:1221.64px;font-size:18.5px;line-height:18.5px;color:#5a5a5a;transform:scaleX(0.8350);">28772.064106</div>
<div class="t" style="left:1136.00px;top:1221.64px;font-size:18.5px;line-height:18.5px;color:#5a5a5a;transform:scaleX(0.8350);">35.786149</div>
<div class="t" style="left:1696.00px;top:1221.64px;font-size:18.5px;line-height:18.5px;color:#5a5a5a;transform:scaleX(0.8350);">804</div>
<div class="t" style="left:17.00px;top:1249.19px;font-size:18.5px;line-height:18.5px;color:#5a5a5a;transform:scaleX(0.8350);">structuredTypeRelatedTo</div>
<div class="t" style="left:576.00px;top:1249.19px;font-size:18.5px;line-height:18.5px;color:#5a5a5a;transform:scaleX(0.8350);">2039.096655</div>
<div class="t" style="left:1136.00px;top:1249.19px;font-size:18.5px;line-height:18.5px;color:#5a5a5a;transform:scaleX(0.8350);">15.930442</div>
<div class="t" style="left:1696.00px;top:1249.19px;font-size:18.5px;line-height:18.5px;color:#5a5a5a;transform:scaleX(0.8350);">128</div>
<div class="t" style="left:17.00px;top:1276.74px;font-size:18.5px;line-height:18.5px;color:#5a5a5a;transform:scaleX(0.8350);">checkSourceFile</div>
<div class="t" style="left:576.00px;top:1276.74px;font-size:18.5px;line-height:18.5px;color:#5a5a5a;transform:scaleX(0.8350);">1969.959748</div>
<div class="t" style="left:1136.00px;top:1276.74px;font-size:18.5px;line-height:18.5px;color:#5a5a5a;transform:scaleX(0.8350);">57.939992</div>
<div class="t" style="left:1696.00px;top:1276.74px;font-size:18.5px;line-height:18.5px;color:#5a5a5a;transform:scaleX(0.8350);">34</div>
<div class="t" style="left:17.00px;top:1304.29px;font-size:18.5px;line-height:18.5px;color:#5a5a5a;transform:scaleX(0.8350);">checkVariableDeclaration</div>
<div class="t" style="left:576.00px;top:1304.29px;font-size:18.5px;line-height:18.5px;color:#5a5a5a;transform:scaleX(0.8350);">1962.580869</div>
<div class="t" style="left:1136.00px;top:1304.29px;font-size:18.5px;line-height:18.5px;color:#5a5a5a;transform:scaleX(0.8350);">130.838724</div>
<div class="t" style="left:1696.00px;top:1304.29px;font-size:18.5px;line-height:18.5px;color:#5a5a5a;transform:scaleX(0.8350);">15</div>
<div class="t" style="left:17.00px;top:1331.84px;font-size:18.5px;line-height:18.5px;color:#5a5a5a;transform:scaleX(0.8350);">getVariancesWorker</div>
<div class="t" style="left:576.00px;top:1331.84px;font-size:18.5px;line-height:18.5px;color:#5a5a5a;transform:scaleX(0.8350);">652.405656</div>
<div class="t" style="left:1136.00px;top:1331.84px;font-size:18.5px;line-height:18.5px;color:#5a5a5a;transform:scaleX(0.8350);">27.183569</div>
<div class="t" style="left:1696.00px;top:1331.84px;font-size:18.5px;line-height:18.5px;color:#5a5a5a;transform:scaleX(0.8350);">24</div>
<div class="t" style="left:17.00px;top:1359.39px;font-size:18.5px;line-height:18.5px;color:#5a5a5a;transform:scaleX(0.8350);">emit</div>
<div class="t" style="left:576.00px;top:1359.39px;font-size:18.5px;line-height:18.5px;color:#5a5a5a;transform:scaleX(0.8350);">88.315125</div>
<div class="t" style="left:1136.00px;top:1359.39px;font-size:18.5px;line-height:18.5px;color:#5a5a5a;transform:scaleX(0.8350);">88.315125</div>
<div class="t" style="left:1696.00px;top:1359.39px;font-size:18.5px;line-height:18.5px;color:#5a5a5a;transform:scaleX(0.8350);">1</div></body></html>
